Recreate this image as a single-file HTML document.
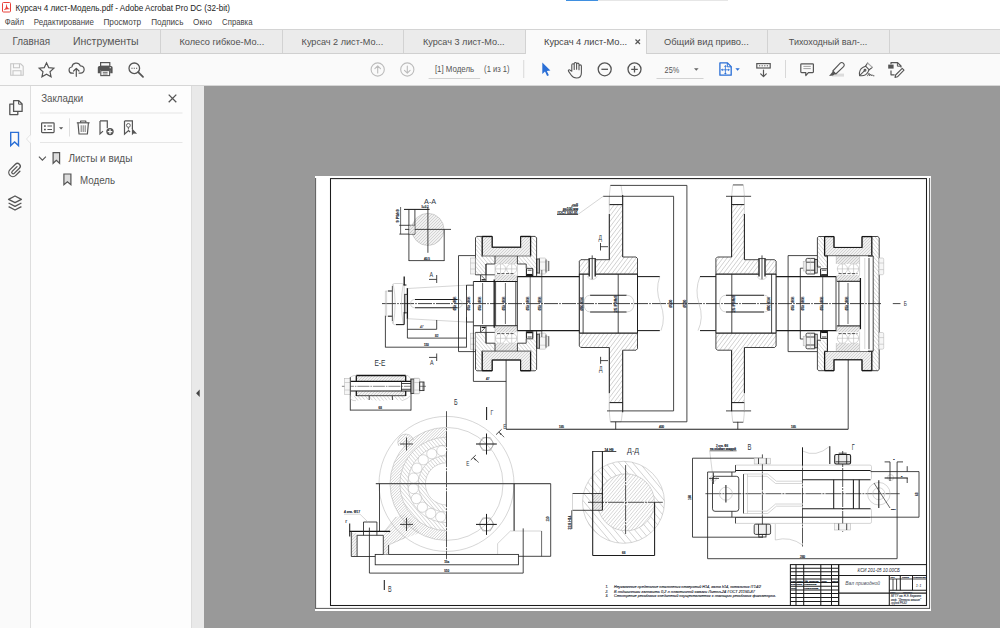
<!DOCTYPE html>
<html><head><meta charset="utf-8"><title>Acrobat</title>
<style>
html,body{margin:0;padding:0;width:1000px;height:628px;overflow:hidden;background:#fff;font-family:"Liberation Sans",sans-serif;}
div{position:absolute;box-sizing:border-box;}
#titlebar{left:0;top:0;width:1000px;height:14px;background:#fff;}
#menubar{left:0;top:14px;width:1000px;height:15px;background:#fff;}
#tabbar{left:0;top:29px;width:1000px;height:25px;background:#ebebeb;border-top:1px solid #d4d4d4;border-bottom:1px solid #d0d0d0;}
.tsep{top:0;width:1px;height:23px;background:#d2d2d2;}
#activetab{left:525px;top:0px;width:122px;height:24px;background:#fafafa;border-left:1px solid #d2d2d2;border-right:1px solid #d2d2d2;}
#toolbar{left:0;top:54px;width:1000px;height:32px;background:#fafafa;border-bottom:1px solid #d6d6d6;}
#sidebar{left:0;top:86px;width:31px;height:542px;background:#fafafa;border-right:1px solid #dedede;}
#panel{left:31px;top:86px;width:160px;height:542px;background:#fdfdfd;}
#splitter{left:191px;top:86px;width:13px;height:542px;background:#e9e9e9;border-left:1px solid #dcdcdc;}
#docarea{left:204px;top:86px;width:796px;height:542px;background:#999;}
#page{left:315px;top:176px;width:615.5px;height:435px;background:#fff;}
svg{position:absolute;left:0;top:0;}
text{font-family:"Liberation Sans",sans-serif;}
</style></head><body>
<div id="titlebar"></div>
<div id="menubar"></div>
<div id="tabbar">
 <div class="tsep" style="left:160px"></div>
 <div class="tsep" style="left:282px"></div>
 <div class="tsep" style="left:403px"></div>
 <div class="tsep" style="left:767px"></div>
 <div class="tsep" style="left:889px"></div>
 <div id="activetab"></div>
</div>
<div id="toolbar"></div>
<div id="sidebar"></div>
<div id="panel"></div>
<div id="splitter"></div>
<div id="docarea"></div>
<div id="page"></div>
<svg id="drawing" fill="none" width="1000" height="628" viewBox="0 0 1000 628">
<style>
#drawing path,#drawing rect,#drawing circle{stroke-linecap:butt;}
#drawing .kk{stroke:#151515;stroke-width:1.3}
#drawing .k{stroke:#1c1c1c;stroke-width:1.050}
#drawing .m{stroke:#262626;stroke-width:0.850}
#drawing .t{stroke:#303030;stroke-width:0.720}
#drawing .l{stroke:#b4b4b4;stroke-width:0.550}
#drawing .l2{stroke:#999;stroke-width:0.600}
#drawing .g2{stroke:#777;stroke-width:1.200}
#drawing .dk{stroke:#333;stroke-width:0.800;stroke-dasharray:3 1.500}
#drawing .cl{stroke:#2a2a2a;stroke-width:0.900;stroke-dasharray:14 1.200 1.600 1.200}
#drawing .cl2{stroke:#333;stroke-width:0.600;stroke-dasharray:12 1 1.500 1}
#drawing .cl3{stroke:#2a2a2a;stroke-width:0.800;stroke-dasharray:16 1 2 1}
#drawing .g3{stroke:#555;stroke-width:1.200}
#drawing .fr{stroke:#444;stroke-width:0.900}
#drawing .n{stroke:none}
#drawing text{font-family:"Liberation Sans",sans-serif;}
</style>
<path class="fr" d="M315.6 178L315.6 608.5"/>
<path class="fr" d="M929.6 178L929.6 608.5"/>
<path class="fr" d="M315.2 608.4L930 608.4"/>
<rect class="k" x="330.5" y="178.6" width="596" height="426.9"/>
<path class="cl" d="M382 303.6L881 303.6"/>
<path class="m" d="M892.8 303.6L900.5 303.6"/>
<text x="903.8" y="305.9" font-size="7.1" fill="#2e3642" textLength="3.2" lengthAdjust="spacingAndGlyphs">Б</text>
<clipPath id="c1"><path d="M411.8 229.4A16.1 16.1 0 1 0 444 229.4A16.1 16.1 0 1 0 411.8 229.4Z"/></clipPath>
<path d="M411.8 229.4A16.1 16.1 0 1 0 444 229.4A16.1 16.1 0 1 0 411.8 229.4Z" fill="#f1f1f1" stroke="none"/>
<path clip-path="url(#c1)" d="M393.44 228.55L427.05 194.94M394.94 230.05L428.55 196.44M396.44 231.55L430.05 197.94M397.94 233.05L431.55 199.44M399.44 234.55L433.05 200.94M400.94 236.05L434.55 202.44M402.44 237.55L436.05 203.94M403.94 239.05L437.55 205.44M405.44 240.55L439.05 206.94M406.94 242.05L440.55 208.44M408.44 243.55L442.05 209.94M409.94 245.05L443.55 211.44M411.44 246.55L445.05 212.94M412.94 248.05L446.55 214.44M414.44 249.55L448.05 215.94M415.94 251.05L449.55 217.44M417.44 252.55L451.05 218.94M418.94 254.05L452.55 220.44M420.44 255.55L454.05 221.94M421.94 257.05L455.55 223.44M423.44 258.55L457.05 224.94M424.94 260.05L458.55 226.44M426.44 261.55L460.05 227.94M427.94 263.05L461.55 229.44M429.44 264.55L463.05 230.94" stroke="#c4c4c4" stroke-width="0.7" fill="none"/>
<circle class="l" cx="427.9" cy="229.4" r="16.1"/>
<text x="424.1" y="203.6" font-size="7.9" fill="#2e3642" textLength="12.1" lengthAdjust="spacingAndGlyphs">А-А</text>
<path class="k" d="M404 209.4L429.6 209.4"/>
<path class="m" d="M408.9 209.4L408.9 261"/>
<path class="m" d="M414.9 209.4L414.9 234.1"/>
<path class="m" d="M427.9 207L427.9 252.8"/>
<path class="m" d="M405 229.4L451 229.4"/>
<path class="m" d="M399.3 225.3L415 225.3"/>
<path class="m" d="M399.3 234.1L415 234.1"/>
<path class="t" d="M400.6 207L400.6 234.1"/>
<path class="m" d="M444.2 229.4L444.2 261"/>
<path class="m" d="M408.9 260.6L444.2 260.6"/>
<clipPath id="c2"><path d="M409.4 225.6L414.6 225.6L414.6 233.8L409.4 233.8Z"/></clipPath>
<path d="M409.4 225.6L414.6 225.6L414.6 233.8L409.4 233.8Z" fill="#ebebeb" stroke="none"/>
<path clip-path="url(#c2)" d="M404.01 229.99L412.29 221.71M405.51 231.49L413.79 223.21M407.01 232.99L415.29 224.71M408.51 234.49L416.79 226.21M410.01 235.99L418.29 227.71M411.51 237.49L419.79 229.21M413.01 238.99L421.29 230.71" stroke="#bcbcbc" stroke-width="0.7" fill="none"/>
<text x="399.2" y="222.5" font-size="3.2" fill="#2c3440" transform="rotate(-90 399.2 222.5)" textLength="13" lengthAdjust="spacingAndGlyphs" stroke="#2c3440" stroke-width="0.22">9 P9/h9</text>
<text x="421.5" y="208.4" font-size="3" fill="#2c3440" textLength="7" lengthAdjust="spacingAndGlyphs" stroke="#2c3440" stroke-width="0.22">5+0.2</text>
<text x="424" y="259.6" font-size="3" fill="#2c3440" stroke="#2c3440" stroke-width="0.22">40.5</text>
<text x="429.5" y="277.1" font-size="7.9" fill="#2e3642" textLength="3.6" lengthAdjust="spacingAndGlyphs">А</text>
<path class="m" d="M429 279.4L436.7 279.4"/>
<path class="m" d="M436.7 275L436.7 283"/>
<text x="429.9" y="364.7" font-size="7.9" fill="#2e3642" textLength="3.6" lengthAdjust="spacingAndGlyphs">А</text>
<path class="m" d="M429 357.4L436.7 357.4"/>
<path class="m" d="M436.7 353.5L436.7 361"/>
<path class="k" d="M388 291L392.4 291"/>
<path class="k" d="M388 316.2L392.4 316.2"/>
<path class="l" d="M385.4 291L388 291"/>
<path class="l" d="M385.4 316.2L388 316.2"/>
<path class="m" d="M385.4 315.6L385.4 347.4"/>
<path class="l" d="M385.4 291L385.4 315.6"/>
<path class="l" d="M386.6 291L386.6 315.6"/>
<path class="l" d="M392.3 286 Q392.3 283.5 394.5 283.5 L402 283.5 Q404.2 283.5 404.2 286 L404.2 321.2 Q404.2 324.6 402 324.6 L394.5 324.6 Q392.3 324.6 392.3 321.2Z"/>
<path class="l" d="M393.3 284.5 Q397 303.6 393.3 323.5 M403.2 284.5 Q399.5 303.6 403.2 323.5"/>
<path class="k" d="M396 324.6L404.2 324.6"/>
<path class="k" d="M404.2 312L404.2 324.6"/>
<path class="t" d="M392.4 286L392.4 321"/>
<path class="kk" d="M404.2 276.5L404.2 285.2"/>
<path class="k" d="M403.6 285L406.4 285"/>
<path class="kk" d="M407.4 288L407.4 319"/>
<path class="m" d="M404.2 294.4L407.4 294.4"/>
<path class="m" d="M404.2 312.8L407.4 312.8"/>
<path class="k" d="M404.8 294.4L404.8 313.4"/>
<path class="l" d="M407.5 288.5L458.4 285.6"/>
<path class="l" d="M407.5 318.7L458.4 321.6"/>
<path class="l" d="M458.4 285.6L466.5 285.2"/>
<path class="l" d="M458.4 321.6L466.5 322"/>
<path class="k" d="M415 299.4L457.7 299.4"/>
<path class="k" d="M415 307.8L457.7 307.8"/>
<path class="l" d="M415 299.4 Q410.6 299.6 410.6 303.6 Q410.6 307.6 415 307.8 M457.7 299.4 Q462.2 299.6 462.2 303.6 Q462.2 307.6 457.7 307.8"/>
<path class="m" d="M436.7 320L436.7 329.3"/>
<path class="m" d="M407.4 329.3L436.7 329.3"/>
<path class="m" d="M407.4 319L407.4 338.1"/>
<path class="m" d="M407.4 338.1L466.5 338.1"/>
<path class="m" d="M385.4 347.2L466.5 347.2"/>
<text x="420" y="328.3" font-size="3" fill="#2c3440" font-style="italic" stroke="#2c3440" stroke-width="0.1">47</text>
<text x="435" y="337.1" font-size="3" fill="#2c3440" stroke="#2c3440" stroke-width="0.22">82</text>
<text x="424" y="346.2" font-size="3" fill="#2c3440" stroke="#2c3440" stroke-width="0.22">110</text>
<path class="m" d="M475.2 255.6L458.5 255.6L458.5 351.6L475.2 351.6"/>
<path class="m" d="M466.5 285.2L466.5 347.4"/>
<path class="m" d="M466.5 285.2L473.4 285.2"/>
<path class="m" d="M466.5 322L473.4 322"/>
<path class="m" d="M817.1 255.6L788.1 255.6L788.1 351.6L817.1 351.6"/>
<path class="m" d="M806 268.2L800.3 268.2L800.3 339L806 339"/>
<clipPath id="c3"><path d="M475.5 237.6L476.8 236.4L482.2 236.4L482.2 256L495 256L495 264L486 264L486 274.8L475.5 274.8Z"/></clipPath>
<path clip-path="url(#c3)" d="M489.9 222.29L518.87 256.81M487.75 224.09L516.72 258.61M485.61 225.89L514.58 260.41M483.46 227.68L512.43 262.21M481.32 229.48L510.29 264.01M479.17 231.28L508.14 265.81M477.03 233.08L506 267.61M474.88 234.88L503.85 269.41M472.74 236.68L501.71 271.21M470.59 238.48L499.56 273.01M468.45 240.28L497.42 274.81M466.3 242.08L495.27 276.61M464.16 243.88L493.13 278.41M462.01 245.68L490.98 280.21M459.87 247.48L488.84 282.01M457.72 249.28L486.69 283.81M455.58 251.08L484.55 285.61M453.43 252.88L482.4 287.41" stroke="#a4a4a4" stroke-width="0.45" fill="none"/>
<clipPath id="c4"><path d="M475.5 369.6L476.8 370.8L482.2 370.8L482.2 351.2L495 351.2L495 343.2L486 343.2L486 332.4L475.5 332.4Z"/></clipPath>
<path clip-path="url(#c4)" d="M489.98 318.22L518.95 352.74M487.83 320.02L516.8 354.54M485.69 321.82L514.66 356.34M483.54 323.62L512.51 358.14M481.4 325.42L510.37 359.94M479.25 327.22L508.22 361.74M477.11 329.02L506.08 363.54M474.96 330.81L503.93 365.34M472.82 332.61L501.79 367.14M470.67 334.41L499.64 368.94M468.53 336.21L497.5 370.74M466.38 338.01L495.35 372.54M464.24 339.81L493.21 374.34M462.09 341.61L491.06 376.14M459.95 343.41L488.92 377.94M457.8 345.21L486.77 379.74M455.66 347.01L484.63 381.54M453.52 348.81L482.48 383.34M451.37 350.61L480.34 385.14" stroke="#a4a4a4" stroke-width="0.45" fill="none"/>
<clipPath id="c5"><path d="M482.2 236.4L492.2 236.4L492.2 247.2L520.6 247.2L520.6 236.4L530.6 236.4L530.6 256L482.2 256Z"/></clipPath>
<path d="M482.2 236.4L492.2 236.4L492.2 247.2L520.6 247.2L520.6 236.4L530.6 236.4L530.6 256L482.2 256Z" fill="#f1f1f1" stroke="none"/>
<path clip-path="url(#c5)" d="M468.43 246.57L506.77 208.23M469.93 248.07L508.27 209.73M471.43 249.57L509.77 211.23M472.93 251.07L511.27 212.73M474.43 252.57L512.77 214.23M475.93 254.07L514.27 215.73M477.43 255.57L515.77 217.23M478.93 257.07L517.27 218.73M480.43 258.57L518.77 220.23M481.93 260.07L520.27 221.73M483.43 261.57L521.77 223.23M484.93 263.07L523.27 224.73M486.43 264.57L524.77 226.23M487.93 266.07L526.27 227.73M489.43 267.57L527.77 229.23M490.93 269.07L529.27 230.73M492.43 270.57L530.77 232.23M493.93 272.07L532.27 233.73M495.43 273.57L533.77 235.23M496.93 275.07L535.27 236.73M498.43 276.57L536.77 238.23M499.93 278.07L538.27 239.73M501.43 279.57L539.77 241.23M502.93 281.07L541.27 242.73M504.43 282.57L542.77 244.23M505.93 284.07L544.27 245.73M507.43 285.57L545.77 247.23" stroke="#c4c4c4" stroke-width="0.7" fill="none"/>
<clipPath id="c6"><path d="M482.2 370.8L492.2 370.8L492.2 360L520.6 360L520.6 370.8L530.6 370.8L530.6 351.2L482.2 351.2Z"/></clipPath>
<path d="M482.2 370.8L492.2 370.8L492.2 360L520.6 360L520.6 370.8L530.6 370.8L530.6 351.2L482.2 351.2Z" fill="#f1f1f1" stroke="none"/>
<path clip-path="url(#c6)" d="M468.03 360.96L506.36 322.63M469.53 362.46L507.86 324.13M471.03 363.96L509.36 325.63M472.53 365.46L510.86 327.13M474.03 366.96L512.36 328.63M475.53 368.46L513.86 330.13M477.03 369.96L515.36 331.63M478.53 371.46L516.86 333.13M480.03 372.96L518.36 334.63M481.53 374.46L519.86 336.13M483.03 375.96L521.36 337.63M484.53 377.46L522.86 339.13M486.03 378.96L524.36 340.63M487.53 380.46L525.86 342.13M489.03 381.96L527.36 343.63M490.53 383.46L528.86 345.13M492.03 384.96L530.36 346.63M493.53 386.46L531.86 348.13M495.03 387.96L533.36 349.63M496.53 389.46L534.86 351.13M498.03 390.96L536.36 352.63M499.53 392.46L537.86 354.13M501.03 393.96L539.36 355.63M502.53 395.46L540.86 357.13M504.03 396.96L542.36 358.63M505.53 398.46L543.86 360.13M507.03 399.96L545.36 361.63" stroke="#c4c4c4" stroke-width="0.7" fill="none"/>
<clipPath id="c7"><path d="M530.6 236.4L535.2 236.4L536.6 237.8L536.6 268L526.2 268L526.2 264L517.4 264L517.4 256L530.6 256Z"/></clipPath>
<path clip-path="url(#c7)" d="M531.02 223.38L556.08 253.24M528.88 225.18L553.93 255.04M526.73 226.98L551.79 256.84M524.59 228.78L549.64 258.64M522.44 230.58L547.5 260.44M520.3 232.38L545.35 262.24M518.15 234.18L543.21 264.04M516.01 235.98L541.06 265.84M513.86 237.78L538.92 267.64M511.72 239.58L536.77 269.44M509.58 241.38L534.63 271.24M507.43 243.18L532.48 273.04M505.29 244.98L530.34 274.84M503.14 246.78L528.19 276.64M501 248.58L526.05 278.44M498.85 250.38L523.9 280.24" stroke="#a4a4a4" stroke-width="0.45" fill="none"/>
<clipPath id="c8"><path d="M530.6 370.8L535.2 370.8L536.6 369.4L536.6 339.2L526.2 339.2L526.2 343.2L517.4 343.2L517.4 351.2L530.6 351.2Z"/></clipPath>
<path clip-path="url(#c8)" d="M530.17 326.9L555.22 356.76M528.02 328.7L553.07 358.56M525.88 330.5L550.93 360.36M523.73 332.3L548.78 362.16M521.59 334.1L546.64 363.96M519.44 335.9L544.49 365.76M517.3 337.7L542.35 367.56M515.15 339.5L540.2 369.36M513.01 341.3L538.06 371.16M510.86 343.1L535.91 372.96M508.72 344.9L533.77 374.76M506.57 346.7L531.62 376.56M504.43 348.5L529.48 378.36M502.28 350.3L527.33 380.16M500.14 352.1L525.19 381.96M497.99 353.9L523.04 383.76" stroke="#a4a4a4" stroke-width="0.45" fill="none"/>
<clipPath id="c9"><path d="M495 256L517.4 256L517.4 264L495 264Z"/></clipPath>
<path d="M495 256L517.4 256L517.4 264L495 264Z" fill="#ebebeb" stroke="none"/>
<path clip-path="url(#c9)" d="M487.98 260.01L506.21 241.78M489.48 261.51L507.71 243.28M490.98 263.01L509.21 244.78M492.48 264.51L510.71 246.28M493.98 266.01L512.21 247.78M495.48 267.51L513.71 249.28M496.98 269.01L515.21 250.78M498.48 270.51L516.71 252.28M499.98 272.01L518.21 253.78M501.48 273.51L519.71 255.28M502.98 275.01L521.21 256.78M504.48 276.51L522.71 258.28M505.98 278.01L524.21 259.78M507.48 279.51L525.71 261.28" stroke="#bcbcbc" stroke-width="0.7" fill="none"/>
<clipPath id="c10"><path d="M495 343.2L517.4 343.2L517.4 351.2L495 351.2Z"/></clipPath>
<path d="M495 343.2L517.4 343.2L517.4 351.2L495 351.2Z" fill="#ebebeb" stroke="none"/>
<path clip-path="url(#c10)" d="M487.88 347.11L506.11 328.88M489.38 348.61L507.61 330.38M490.88 350.11L509.11 331.88M492.38 351.61L510.61 333.38M493.88 353.11L512.11 334.88M495.38 354.61L513.61 336.38M496.88 356.11L515.11 337.88M498.38 357.61L516.61 339.38M499.88 359.11L518.11 340.88M501.38 360.61L519.61 342.38M502.88 362.11L521.11 343.88M504.38 363.61L522.61 345.38M505.88 365.11L524.11 346.88M507.38 366.61L525.61 348.38" stroke="#bcbcbc" stroke-width="0.7" fill="none"/>
<clipPath id="c11"><path d="M495 274.8L517.4 274.8L517.4 280.8L495 280.8Z"/></clipPath>
<path d="M495 274.8L517.4 274.8L517.4 280.8L495 280.8Z" fill="#ebebeb" stroke="none"/>
<path clip-path="url(#c11)" d="M488.29 277.7L506.1 259.89M489.79 279.2L507.6 261.39M491.29 280.7L509.1 262.89M492.79 282.2L510.6 264.39M494.29 283.7L512.1 265.89M495.79 285.2L513.6 267.39M497.29 286.7L515.1 268.89M498.79 288.2L516.6 270.39M500.29 289.7L518.1 271.89M501.79 291.2L519.6 273.39M503.29 292.7L521.1 274.89M504.79 294.2L522.6 276.39M506.29 295.7L524.1 277.89M507.79 297.2L525.6 279.39" stroke="#bcbcbc" stroke-width="0.7" fill="none"/>
<clipPath id="c12"><path d="M495 326.4L517.4 326.4L517.4 332.4L495 332.4Z"/></clipPath>
<path d="M495 326.4L517.4 326.4L517.4 332.4L495 332.4Z" fill="#ebebeb" stroke="none"/>
<path clip-path="url(#c12)" d="M487.99 329L505.8 311.19M489.49 330.5L507.3 312.69M490.99 332L508.8 314.19M492.49 333.5L510.3 315.69M493.99 335L511.8 317.19M495.49 336.5L513.3 318.69M496.99 338L514.8 320.19M498.49 339.5L516.3 321.69M499.99 341L517.8 323.19M501.49 342.5L519.3 324.69M502.99 344L520.8 326.19M504.49 345.5L522.3 327.69M505.99 347L523.8 329.19M507.49 348.5L525.3 330.69" stroke="#bcbcbc" stroke-width="0.7" fill="none"/>
<circle class="l" cx="500.5" cy="268.9" r="5.1" fill="#fff"/>
<circle class="l" cx="500.5" cy="338.3" r="5.1" fill="#fff"/>
<circle class="l" cx="511.7" cy="268.9" r="5.1" fill="#fff"/>
<circle class="l" cx="511.7" cy="338.3" r="5.1" fill="#fff"/>
<path class="l" d="M500.5 264L500.5 274"/>
<path class="l" d="M500.5 343.2L500.5 333.2"/>
<path class="l" d="M511.7 264L511.7 274"/>
<path class="l" d="M511.7 343.2L511.7 333.2"/>
<path class="l" d="M495.5 268.9L517 268.9"/>
<path class="l" d="M495.5 338.3L517 338.3"/>
<path class="dk" d="M497 273.6L515 273.6"/>
<path class="dk" d="M497 333.6L515 333.6"/>
<path class="m" d="M475.5 274.8L475.5 237.8L476.8 236.4L492.2 236.4L492.2 247.2L520.6 247.2L520.6 236.4L535.2 236.4L536.6 237.8L536.6 274.8"/>
<path class="m" d="M475.5 332.4L475.5 369.4L476.8 370.8L492.2 370.8L492.2 360L520.6 360L520.6 370.8L535.2 370.8L536.6 369.4L536.6 332.4"/>
<path class="kk" d="M482.2 236.4L482.2 256.4"/>
<path class="kk" d="M482.2 370.8L482.2 350.8"/>
<path class="kk" d="M530.6 236.4L530.6 256.4"/>
<path class="kk" d="M530.6 370.8L530.6 350.8"/>
<path class="kk" d="M482.2 236.5L492.2 236.5"/>
<path class="kk" d="M482.2 370.7L492.2 370.7"/>
<path class="kk" d="M520.6 236.5L530.6 236.5"/>
<path class="kk" d="M520.6 370.7L530.6 370.7"/>
<path class="k" d="M492.2 236.4L492.2 247.2L520.6 247.2L520.6 236.4"/>
<path class="k" d="M492.2 370.8L492.2 360L520.6 360L520.6 370.8"/>
<path class="g2" d="M482 256L531 256"/>
<path class="g2" d="M482 351.2L531 351.2"/>
<path class="m" d="M495 256L495 264L486 264L486 274.8"/>
<path class="m" d="M495 351.2L495 343.2L486 343.2L486 332.4"/>
<path class="m" d="M517.4 256L517.4 264L526.2 264L526.2 268.4L533 268.4"/>
<path class="m" d="M517.4 351.2L517.4 343.2L526.2 343.2L526.2 338.8L533 338.8"/>
<path class="m" d="M486 274.8L495 274.8"/>
<path class="m" d="M486 332.4L495 332.4"/>
<path class="m" d="M486 264L486 281"/>
<path class="m" d="M486 343.2L486 326.2"/>
<path class="l" d="M495 264L495 281"/>
<path class="l" d="M495 343.2L495 326.2"/>
<path class="l" d="M517.4 264L517.4 276.6"/>
<path class="l" d="M517.4 343.2L517.4 330.6"/>
<path class="m" d="M480.6 281L480.6 274.8L486 274.8"/>
<path class="m" d="M480.6 326.2L480.6 332.4L486 332.4"/>
<path class="kk" d="M481.6 279.8L485.6 279.8"/>
<path class="kk" d="M481.6 327.4L485.6 327.4"/>
<path class="t" d="M481.4 275.6L485 279.4"/>
<path class="t" d="M481.4 331.6L485 327.8"/>
<path class="k" d="M526.4 268.8L526.4 275.4L532.8 275.4L532.8 268.8"/>
<path class="k" d="M526.4 338.4L526.4 331.8L532.8 331.8L532.8 338.4"/>
<path class="kk" d="M527 274.6L532.4 274.6"/>
<path class="kk" d="M527 332.6L532.4 332.6"/>
<path class="m" d="M527.6 270.2L531.6 270.2"/>
<path class="m" d="M527.6 337L531.6 337"/>
<path class="m" d="M475.5 274.8L480.6 274.8"/>
<path class="m" d="M475.5 332.4L480.6 332.4"/>
<path class="m" d="M536.6 268L536.6 276.6"/>
<path class="m" d="M536.6 339.2L536.6 330.6"/>
<path class="m" d="M533 276.4L541.8 276.4"/>
<path class="m" d="M533 330.8L541.8 330.8"/>
<rect class="l" x="470.4" y="258" width="4.8" height="16" fill="#f4f4f4"/>
<rect class="l" x="470.4" y="333.2" width="4.8" height="16" fill="#f4f4f4"/>
<path class="l" d="M470.4 263L475 263"/>
<path class="l" d="M470.4 344.2L475 344.2"/>
<path class="l" d="M470.4 269L475 269"/>
<path class="l" d="M470.4 338.2L475 338.2"/>
<rect class="m" x="536.8" y="259" width="2.4" height="14"/>
<rect class="m" x="536.8" y="334.2" width="2.4" height="14"/>
<path class="l" d="M539.2 258 L544.6 258 Q546 258 546 259.4 L546 272.6 Q546 274 544.6 274 L539.2 274Z" fill="#f6f6f6"/>
<path class="l" d="M539.2 349.2 L544.6 349.2 Q546 349.2 546 347.8 L546 334.6 Q546 333.2 544.6 333.2 L539.2 333.2Z" fill="#f6f6f6"/>
<path class="l" d="M539.2 262L546 262"/>
<path class="l" d="M539.2 345.2L546 345.2"/>
<path class="l" d="M539.2 270L546 270"/>
<path class="l" d="M539.2 337.2L546 337.2"/>
<rect class="l" x="546" y="261" width="2.6" height="10" fill="#e8e8e8"/>
<rect class="l" x="546" y="336.2" width="2.6" height="10" fill="#e8e8e8"/>
<path class="t" d="M546 259.4L546 272.6"/>
<path class="t" d="M546 347.8L546 334.6"/>
<path class="t" d="M548.8 261L548.8 271"/>
<path class="t" d="M548.8 346.2L548.8 336.2"/>
<path class="m" d="M536.8 259L536.8 273"/>
<path class="m" d="M536.8 348.2L536.8 334.2"/>
<path class="m" d="M539.4 258.4L539.4 273.6"/>
<path class="m" d="M539.4 348.8L539.4 333.6"/>
<path class="k" d="M473.4 281.4L517.4 281.4"/>
<path class="k" d="M473.4 325.8L517.4 325.8"/>
<path class="m" d="M473.4 281.4L473.4 325.8"/>
<path class="m" d="M466.5 285.2L466.5 290"/>
<path class="m" d="M466.5 322L466.5 317.2"/>
<path class="kk" d="M494.2 279.5L494.2 327.7"/>
<path class="m" d="M495.6 281.4L495.6 325.8"/>
<path class="m" d="M515.8 281.4L515.8 325.8"/>
<path class="m" d="M517.4 276.6L517.4 330.6"/>
<path class="t" d="M482.6 283L482.6 324"/>
<path class="t" d="M505.4 283L505.4 324"/>
<path class="t" d="M530.2 276.6L530.2 330.6"/>
<path class="t" d="M541.8 270L541.8 337"/>
<path class="k" d="M517.4 276.6L579.3 276.6"/>
<path class="k" d="M517.4 330.6L579.3 330.6"/>
<text x="456.5" y="302.4" font-size="2.7" fill="#2a3240" transform="rotate(-90 456.5 302.4)" textLength="5.6" lengthAdjust="spacingAndGlyphs" stroke="#2a3240" stroke-width="0.22">Ø60k6</text>
<text x="456.5" y="310.2" font-size="2.7" fill="#2a3240" transform="rotate(-90 456.5 310.2)" textLength="5" lengthAdjust="spacingAndGlyphs" stroke="#2a3240" stroke-width="0.22">Ø55h</text>
<text x="470.1" y="302.4" font-size="2.7" fill="#2a3240" transform="rotate(-90 470.1 302.4)" textLength="5.6" lengthAdjust="spacingAndGlyphs" stroke="#2a3240" stroke-width="0.22">Ø60k6</text>
<text x="470.1" y="310.2" font-size="2.7" fill="#2a3240" transform="rotate(-90 470.1 310.2)" textLength="5" lengthAdjust="spacingAndGlyphs" stroke="#2a3240" stroke-width="0.22">Ø55h</text>
<text x="481.3" y="302.4" font-size="2.7" fill="#2a3240" transform="rotate(-90 481.3 302.4)" textLength="5.6" lengthAdjust="spacingAndGlyphs" stroke="#2a3240" stroke-width="0.22">Ø60k6</text>
<text x="481.3" y="310.2" font-size="2.7" fill="#2a3240" transform="rotate(-90 481.3 310.2)" textLength="5" lengthAdjust="spacingAndGlyphs" stroke="#2a3240" stroke-width="0.22">Ø55h</text>
<text x="504.9" y="302.4" font-size="2.7" fill="#2a3240" transform="rotate(-90 504.9 302.4)" textLength="5.6" lengthAdjust="spacingAndGlyphs" stroke="#2a3240" stroke-width="0.22">Ø60k6</text>
<text x="504.9" y="310.2" font-size="2.7" fill="#2a3240" transform="rotate(-90 504.9 310.2)" textLength="5" lengthAdjust="spacingAndGlyphs" stroke="#2a3240" stroke-width="0.22">Ø55h</text>
<text x="529.3" y="302.4" font-size="2.7" fill="#2a3240" transform="rotate(-90 529.3 302.4)" textLength="5.6" lengthAdjust="spacingAndGlyphs" stroke="#2a3240" stroke-width="0.22">Ø60k6</text>
<text x="529.3" y="310.2" font-size="2.7" fill="#2a3240" transform="rotate(-90 529.3 310.2)" textLength="5" lengthAdjust="spacingAndGlyphs" stroke="#2a3240" stroke-width="0.22">Ø55h</text>
<text x="540.9" y="302.4" font-size="2.7" fill="#2a3240" transform="rotate(-90 540.9 302.4)" textLength="5.6" lengthAdjust="spacingAndGlyphs" stroke="#2a3240" stroke-width="0.22">Ø60k6</text>
<text x="540.9" y="310.2" font-size="2.7" fill="#2a3240" transform="rotate(-90 540.9 310.2)" textLength="5" lengthAdjust="spacingAndGlyphs" stroke="#2a3240" stroke-width="0.22">Ø55h</text>
<path class="m" d="M506.1 360L506.1 429.2"/>
<path class="m" d="M473.4 325.8L473.4 381.4"/>
<path class="m" d="M473.4 381.4L506.1 381.4"/>
<text x="486" y="380.4" font-size="3" fill="#2c3440" stroke="#2c3440" stroke-width="0.22">47</text>
<text x="454" y="405" font-size="9.0" fill="#2e3642" textLength="3.6" lengthAdjust="spacingAndGlyphs">Б</text>
<path class="k" d="M486.6 407L486.6 420"/>
<text x="490.5" y="414.6" font-size="8.0" fill="#2e3642" textLength="2.8" lengthAdjust="spacingAndGlyphs">Г</text>
<clipPath id="c13"><path d="M609.3 204.6L622.5 204.6L622.5 257L636 257L637.5 258.5L637.5 274.1L579.3 274.1L579.3 261.2L580.8 259.7L609.3 259.7Z"/></clipPath>
<path clip-path="url(#c13)" d="M541.28 246.78L597.04 172.78M543.92 248.76L599.67 174.77M546.55 250.75L602.31 176.76M549.19 252.74L604.95 178.74M551.82 254.72L607.58 180.73M554.46 256.71L610.22 182.71M557.09 258.69L612.85 184.7M559.73 260.68L615.49 186.69M562.36 262.67L618.12 188.67M565 264.65L620.76 190.66M567.64 266.64L623.39 192.64M570.27 268.62L626.03 194.63M572.91 270.61L628.66 196.62M575.54 272.6L631.3 198.6M578.18 274.58L633.94 200.59M580.81 276.57L636.57 202.57M583.45 278.55L639.21 204.56M586.08 280.54L641.84 206.55M588.72 282.53L644.48 208.53M591.35 284.51L647.11 210.52M593.99 286.5L649.75 212.5M596.63 288.48L652.38 214.49M599.26 290.47L655.02 216.48M601.9 292.45L657.66 218.46M604.53 294.44L660.29 220.45M607.17 296.43L662.93 222.43M609.8 298.41L665.56 224.42M612.44 300.4L668.2 226.41M615.07 302.38L670.83 228.39M617.71 304.37L673.47 230.38" stroke="#a0a0a0" stroke-width="0.5" fill="none"/>
<clipPath id="c14"><path d="M609.3 402.6L622.5 402.6L622.5 350.2L636 350.2L637.5 348.7L637.5 333.1L579.3 333.1L579.3 346L580.8 347.5L609.3 347.5Z"/></clipPath>
<path clip-path="url(#c14)" d="M542.77 376.4L598.53 302.41M545.41 378.39L601.17 304.39M548.04 380.37L603.8 306.38M550.68 382.36L606.44 308.36M553.31 384.34L609.07 310.35M555.95 386.33L611.71 312.34M558.58 388.32L614.34 314.32M561.22 390.3L616.98 316.31M563.86 392.29L619.61 318.29M566.49 394.27L622.25 320.28M569.13 396.26L624.88 322.27M571.76 398.25L627.52 324.25M574.4 400.23L630.16 326.24M577.03 402.22L632.79 328.22M579.67 404.2L635.43 330.21M582.3 406.19L638.06 332.2M584.94 408.18L640.7 334.18M587.57 410.16L643.33 336.17M590.21 412.15L645.97 338.15M592.85 414.13L648.6 340.14M595.48 416.12L651.24 342.13M598.12 418.11L653.88 344.11M600.75 420.09L656.51 346.1M603.39 422.08L659.15 348.08M606.02 424.06L661.78 350.07M608.66 426.05L664.42 352.06M611.29 428.04L667.05 354.04M613.93 430.02L669.69 356.03M616.57 432.01L672.32 358.01M619.2 433.99L674.96 360" stroke="#a0a0a0" stroke-width="0.5" fill="none"/>
<path class="l" d="M610.4 185.4 L621 185.4 Q622.6 192 622.7 204.6 M610.4 185.4 Q609.2 192 609.3 204.6"/>
<path class="l" d="M610.4 421.8 L621 421.8 Q622.6 415.2 622.7 402.6 M610.4 421.8 Q609.2 415.2 609.3 402.6"/>
<path class="k" d="M609.3 204.6L622.7 204.6"/>
<path class="k" d="M609.3 402.6L622.7 402.6"/>
<path class="k" d="M609.3 214L609.3 259.7"/>
<path class="k" d="M609.3 393.2L609.3 347.5"/>
<path class="l" d="M609.3 196.3L609.3 214"/>
<path class="l" d="M609.3 410.9L609.3 393.2"/>
<path class="k" d="M622.7 195L622.7 257"/>
<path class="k" d="M622.7 412.2L622.7 350.2"/>
<path class="m" d="M609.3 259.7L580.8 259.7L579.3 261.2L579.3 274.1"/>
<path class="m" d="M609.3 347.5L580.8 347.5L579.3 346L579.3 333.1"/>
<path class="m" d="M622.7 257L636 257L637.5 258.5L637.5 274.1"/>
<path class="m" d="M622.7 350.2L636 350.2L637.5 348.7L637.5 333.1"/>
<path class="k" d="M579.3 274.1L637.5 274.1"/>
<path class="k" d="M579.3 333.1L637.5 333.1"/>
<path class="k" d="M579.3 274.1L579.3 333.1"/>
<path class="k" d="M637.5 274.1L637.5 333.1"/>
<path class="m" d="M583.1 274.1L583.1 333.1"/>
<path class="m" d="M618.2 274.1L618.2 333.1"/>
<rect class="n" x="588.9" y="258.4" width="6.6" height="18" fill="#fff"/>
<path class="kk" d="M589.2 258.4L589.2 276.6"/>
<path class="kk" d="M595.2 258.4L595.2 276.6"/>
<path class="m" d="M592.2 255.4L592.2 279.4"/>
<path class="m" d="M588.6 258.6L595.8 258.6"/>
<path class="l" d="M587 276.4 Q592.2 283 597.4 276.4"/>
<path class="k" d="M590.1 295.2L626.6 295.2"/>
<path class="k" d="M590.1 312L626.6 312"/>
<path class="l" d="M590.1 295.2 Q584 295.6 584 303.6 Q584 311.6 590.1 312 M626.6 295.2 Q634 295.6 634 303.6 Q634 311.6 626.6 312"/>
<text x="582.5" y="310.5" font-size="2.8" fill="#2c3440" transform="rotate(-90 582.5 310.5)" textLength="13.5" lengthAdjust="spacingAndGlyphs" stroke="#2c3440" stroke-width="0.22">Ø90 H7/r6</text>
<text x="616.6" y="312.4" font-size="2.8" fill="#2c3440" transform="rotate(-90 616.6 312.4)" textLength="17" lengthAdjust="spacingAndGlyphs" stroke="#2c3440" stroke-width="0.22">25 P9/h9</text>
<path class="k" d="M637.5 276.6L659.8 276.6"/>
<path class="k" d="M637.5 330.6L659.8 330.6"/>
<path class="l" d="M659.8 276.6 Q655 290 660.5 303.6 Q666 318 661 330.6"/>
<path class="l" d="M700 276.6 Q694.500 290 699 303.6 Q704 318 698 330.6"/>
<path class="k" d="M700 276.6L715.9 276.6"/>
<path class="k" d="M700 330.6L715.9 330.6"/>
<path class="m" d="M610.4 185.4L686.9 185.4L686.9 421.8L610.5 421.8"/>
<path class="m" d="M603.2 196.3L673.6 196.3L673.6 410.9L607 410.9"/>
<text x="672.4" y="307.4" font-size="2.8" fill="#2c3440" transform="rotate(-90 672.4 307.4)" textLength="7.5" lengthAdjust="spacingAndGlyphs" stroke="#2c3440" stroke-width="0.22">Ø300</text>
<text x="685.6" y="307.4" font-size="2.8" fill="#2c3440" transform="rotate(-90 685.6 307.4)" textLength="7.5" lengthAdjust="spacingAndGlyphs" stroke="#2c3440" stroke-width="0.22">Ø330</text>
<path class="l" d="M603.2 196.3L578 214.4L557 214.4"/>
<text x="572" y="205.6" font-size="3" fill="#2c3440" textLength="6" lengthAdjust="spacingAndGlyphs" stroke="#2c3440" stroke-width="0.22">z=8</text>
<path class="t" d="M571 206.2L578 206.2"/>
<text x="563" y="209.9" font-size="3" fill="#2c3440" textLength="15" lengthAdjust="spacingAndGlyphs" stroke="#2c3440" stroke-width="0.22">p=100 мм</text>
<path class="t" d="M562.6 210.4L578 210.4"/>
<text x="557.4" y="213.9" font-size="3" fill="#2c3440" textLength="20.4" lengthAdjust="spacingAndGlyphs" stroke="#2c3440" stroke-width="0.22">ГОСТ 592-81</text>
<path class="m" d="M557 214.4L578 214.4"/>
<text x="598.6" y="239.8" font-size="7.1" fill="#2e3642" textLength="3.5" lengthAdjust="spacingAndGlyphs">Д</text>
<path class="m" d="M600.5 243L600.5 250.5"/>
<path class="m" d="M600.5 246.7L608 246.7"/>
<text x="598.9" y="370.8" font-size="7.1" fill="#2e3642" textLength="3.5" lengthAdjust="spacingAndGlyphs">Д</text>
<path class="m" d="M600.6 356.8L600.6 363.8"/>
<path class="m" d="M600.6 360.6L608 360.6"/>
<clipPath id="c15"><path d="M731.7 204.6L744.3 204.6L744.3 259.7L774.6 259.7L776.1 261.2L776.1 274.1L715.9 274.1L715.9 258.5L717.4 257L731.7 257Z"/></clipPath>
<path clip-path="url(#c15)" d="M677.7 246.7L734.24 171.67M680.33 248.68L736.87 173.65M682.97 250.67L739.51 175.64M685.6 252.66L742.14 177.63M688.24 254.64L744.78 179.61M690.88 256.63L747.41 181.6M693.51 258.61L750.05 183.58M696.15 260.6L752.69 185.57M698.78 262.59L755.32 187.56M701.42 264.57L757.96 189.54M704.05 266.56L760.59 191.53M706.69 268.54L763.23 193.51M709.32 270.53L765.86 195.5M711.96 272.52L768.5 197.49M714.59 274.5L771.13 199.47M717.23 276.49L773.77 201.46M719.87 278.47L776.4 203.44M722.5 280.46L779.04 205.43M725.14 282.45L781.68 207.42M727.77 284.43L784.31 209.4M730.41 286.42L786.95 211.39M733.04 288.4L789.58 213.37M735.68 290.39L792.22 215.36M738.31 292.38L794.85 217.35M740.95 294.36L797.49 219.33M743.59 296.35L800.12 221.32M746.22 298.33L802.76 223.3M748.86 300.32L805.4 225.29M751.49 302.31L808.03 227.28M754.13 304.29L810.67 229.26M756.76 306.28L813.3 231.25" stroke="#a0a0a0" stroke-width="0.5" fill="none"/>
<clipPath id="c16"><path d="M731.7 402.6L744.3 402.6L744.3 347.5L774.6 347.5L776.1 346L776.1 333.1L715.9 333.1L715.9 348.7L717.4 350.2L731.7 350.2Z"/></clipPath>
<path clip-path="url(#c16)" d="M679.19 376.32L735.73 301.29M681.82 378.31L738.36 303.28M684.46 380.29L741 305.26M687.1 382.28L743.63 307.25M689.73 384.27L746.27 309.24M692.37 386.25L748.9 311.22M695 388.24L751.54 313.21M697.64 390.22L754.18 315.19M700.27 392.21L756.81 317.18M702.91 394.2L759.45 319.17M705.54 396.18L762.08 321.15M708.18 398.17L764.72 323.14M710.81 400.15L767.35 325.12M713.45 402.14L769.99 327.11M716.09 404.13L772.62 329.1M718.72 406.11L775.26 331.08M721.36 408.1L777.9 333.07M723.99 410.08L780.53 335.05M726.63 412.07L783.17 337.04M729.26 414.06L785.8 339.03M731.9 416.04L788.44 341.01M734.53 418.03L791.07 343M737.17 420.01L793.71 344.98M739.81 422L796.34 346.97M742.44 423.99L798.98 348.96M745.08 425.97L801.61 350.94M747.71 427.96L804.25 352.93M750.35 429.94L806.89 354.91M752.98 431.93L809.52 356.9M755.62 433.92L812.16 358.89" stroke="#a0a0a0" stroke-width="0.5" fill="none"/>
<path class="l" d="M732.8 184.9 L743.4 184.9 Q744.5 192 744.5 204.6 M732.8 184.9 Q731.5 192 731.6 204.6"/>
<path class="l" d="M732.8 422.3 L743.4 422.3 Q744.5 415.2 744.5 402.6 M732.8 422.3 Q731.5 415.2 731.6 402.6"/>
<path class="g2" d="M733 184.9L743.2 184.9"/>
<path class="g2" d="M733 422.3L743.2 422.3"/>
<path class="k" d="M731.6 204.6L744.4 204.6"/>
<path class="k" d="M731.6 402.6L744.4 402.6"/>
<path class="m" d="M726 196.3L751.1 196.3"/>
<path class="m" d="M726 410.9L751.1 410.9"/>
<path class="k" d="M731.6 196L731.6 257"/>
<path class="k" d="M731.6 411.2L731.6 350.2"/>
<path class="k" d="M744.4 214L744.4 259.7"/>
<path class="k" d="M744.4 393.2L744.4 347.5"/>
<path class="l" d="M744.4 196.3L744.4 214"/>
<path class="l" d="M744.4 410.9L744.4 393.2"/>
<path class="m" d="M731.6 257L717.4 257L715.9 258.5L715.9 274.1"/>
<path class="m" d="M731.6 350.2L717.4 350.2L715.9 348.7L715.9 333.1"/>
<path class="m" d="M744.4 259.7L774.6 259.7L776.1 261.2L776.1 274.1"/>
<path class="m" d="M744.4 347.5L774.6 347.5L776.1 346L776.1 333.1"/>
<path class="k" d="M715.9 274.1L776.1 274.1"/>
<path class="k" d="M715.9 333.1L776.1 333.1"/>
<path class="k" d="M715.9 274.1L715.9 333.1"/>
<path class="k" d="M776.1 274.1L776.1 333.1"/>
<path class="m" d="M731.8 274.1L731.8 333.1"/>
<path class="m" d="M771.6 274.1L771.6 333.1"/>
<rect class="n" x="758.7" y="258.4" width="6.6" height="18" fill="#fff"/>
<path class="kk" d="M759 258.4L759 276.6"/>
<path class="kk" d="M765 258.4L765 276.6"/>
<path class="m" d="M762 255.4L762 279.4"/>
<path class="m" d="M758.4 258.6L765.6 258.6"/>
<path class="l" d="M756.8 276.4 Q762 283 767.2 276.4"/>
<path class="k" d="M726 295.2L764 295.2"/>
<path class="k" d="M726 312L764 312"/>
<path class="l" d="M726 295.2 Q719.5 295.6 719.5 303.6 Q719.5 311.6 726 312 M764 295.2 Q770.500 295.6 770.500 303.6 Q770.500 311.6 764 312"/>
<text x="735.2" y="312.4" font-size="2.8" fill="#2c3440" transform="rotate(-90 735.2 312.4)" textLength="17" lengthAdjust="spacingAndGlyphs" stroke="#2c3440" stroke-width="0.22">25 P9/h9</text>
<text x="770.2" y="310.5" font-size="2.8" fill="#2c3440" transform="rotate(-90 770.2 310.5)" textLength="13.5" lengthAdjust="spacingAndGlyphs" stroke="#2c3440" stroke-width="0.22">Ø90 H7/r6</text>
<path class="k" d="M776.1 276.6L836.8 276.6"/>
<path class="k" d="M776.1 330.6L836.8 330.6"/>
<path class="m" d="M737.8 421.8L737.8 429.2"/>
<path class="m" d="M615.7 421.8L615.7 429.2"/>
<path class="k" d="M506.1 429.2L848.2 429.2"/>
<path class="m" d="M848.2 360L848.2 429.2"/>
<text x="559" y="428.2" font-size="3" fill="#2c3440" stroke="#2c3440" stroke-width="0.22">185</text>
<text x="659" y="428.2" font-size="3" fill="#2c3440" stroke="#2c3440" stroke-width="0.22">400</text>
<text x="791" y="428.2" font-size="3" fill="#2c3440" stroke="#2c3440" stroke-width="0.22">185</text>
<clipPath id="c17"><path d="M817.4 237.8L818.6 236.5L824.6 236.5L824.6 256L827.4 256L827.4 267L817.4 267Z"/></clipPath>
<path clip-path="url(#c17)" d="M826.02 226.46L847.93 252.58M823.87 228.26L845.79 254.38M821.73 230.06L843.64 256.18M819.58 231.86L841.5 257.98M817.44 233.66L839.35 259.78M815.29 235.46L837.21 261.58M813.15 237.26L835.06 263.38M811 239.06L832.92 265.18M808.86 240.86L830.77 266.98M806.71 242.66L828.63 268.78M804.57 244.46L826.48 270.58M802.42 246.26L824.34 272.38M800.28 248.06L822.2 274.18M798.13 249.86L820.05 275.98" stroke="#a4a4a4" stroke-width="0.45" fill="none"/>
<clipPath id="c18"><path d="M817.4 369.4L818.6 370.7L824.6 370.7L824.6 351.2L827.4 351.2L827.4 340.2L817.4 340.2Z"/></clipPath>
<path clip-path="url(#c18)" d="M825.6 330.51L847.52 356.63M823.46 332.31L845.37 358.43M821.31 334.11L843.23 360.23M819.17 335.91L841.08 362.03M817.02 337.71L838.94 363.83M814.88 339.51L836.79 365.63M812.73 341.31L834.65 367.43M810.59 343.11L832.5 369.23M808.44 344.91L830.36 371.03M806.3 346.71L828.21 372.83M804.15 348.51L826.07 374.63M802.01 350.31L823.92 376.43M799.86 352.11L821.78 378.23M797.72 353.91L819.63 380.03" stroke="#a4a4a4" stroke-width="0.45" fill="none"/>
<clipPath id="c19"><path d="M824.6 236.5L834 236.5L834 247.4L862 247.4L862 236.5L871.8 236.5L871.8 255.5L824.6 255.5Z"/></clipPath>
<path d="M824.6 236.5L834 236.5L834 247.4L862 247.4L862 236.5L871.8 236.5L871.8 255.5L824.6 255.5Z" fill="#f1f1f1" stroke="none"/>
<path clip-path="url(#c19)" d="M810.9 246.09L848.29 208.7M812.4 247.59L849.79 210.2M813.9 249.09L851.29 211.7M815.4 250.59L852.79 213.2M816.9 252.09L854.29 214.7M818.4 253.59L855.79 216.2M819.9 255.09L857.29 217.7M821.4 256.59L858.79 219.2M822.9 258.09L860.29 220.7M824.4 259.59L861.79 222.2M825.9 261.09L863.29 223.7M827.4 262.59L864.79 225.2M828.9 264.09L866.29 226.7M830.4 265.59L867.79 228.2M831.9 267.09L869.29 229.7M833.4 268.59L870.79 231.2M834.9 270.09L872.29 232.7M836.4 271.59L873.79 234.2M837.9 273.09L875.29 235.7M839.4 274.59L876.79 237.2M840.9 276.09L878.29 238.7M842.4 277.59L879.79 240.2M843.9 279.09L881.29 241.7M845.4 280.59L882.79 243.2M846.9 282.09L884.29 244.7M848.4 283.59L885.79 246.2M849.9 285.09L887.29 247.7" stroke="#c4c4c4" stroke-width="0.7" fill="none"/>
<clipPath id="c20"><path d="M824.6 370.7L834 370.7L834 359.8L862 359.8L862 370.7L871.8 370.7L871.8 351.7L824.6 351.7Z"/></clipPath>
<path d="M824.6 370.7L834 370.7L834 359.8L862 359.8L862 370.7L871.8 370.7L871.8 351.7L824.6 351.7Z" fill="#f1f1f1" stroke="none"/>
<path clip-path="url(#c20)" d="M810.3 360.69L847.69 323.3M811.8 362.19L849.19 324.8M813.3 363.69L850.69 326.3M814.8 365.19L852.19 327.8M816.3 366.69L853.69 329.3M817.8 368.19L855.19 330.8M819.3 369.69L856.69 332.3M820.8 371.19L858.19 333.8M822.3 372.69L859.69 335.3M823.8 374.19L861.19 336.8M825.3 375.69L862.69 338.3M826.8 377.19L864.19 339.8M828.3 378.69L865.69 341.3M829.8 380.19L867.19 342.8M831.3 381.69L868.69 344.3M832.8 383.19L870.19 345.8M834.3 384.69L871.69 347.3M835.8 386.19L873.19 348.8M837.3 387.69L874.69 350.3M838.8 389.19L876.19 351.8M840.3 390.69L877.69 353.3M841.8 392.19L879.19 354.8M843.3 393.69L880.69 356.3M844.8 395.19L882.19 357.8M846.3 396.69L883.69 359.3M847.8 398.19L885.19 360.8M849.3 399.69L886.69 362.3" stroke="#c4c4c4" stroke-width="0.7" fill="none"/>
<clipPath id="c21"><path d="M871.8 236.5L877.8 236.5L879.2 237.8L879.2 369.4L877.8 370.7L871.8 370.7L871.8 351.7L873.2 351.7L873.2 255.5L871.8 255.5Z"/></clipPath>
<path clip-path="url(#c21)" d="M885.65 206.05L973.33 310.54M883.51 207.85L971.18 312.34M881.36 209.65L969.04 314.14M879.22 211.45L966.89 315.94M877.07 213.25L964.75 317.74M874.93 215.05L962.6 319.54M872.78 216.85L960.46 321.34M870.64 218.65L958.31 323.14M868.49 220.45L956.17 324.94M866.35 222.25L954.02 326.74M864.2 224.05L951.88 328.54M862.06 225.85L949.73 330.34M859.91 227.65L947.59 332.14M857.77 229.45L945.44 333.94M855.62 231.25L943.3 335.74M853.48 233.05L941.16 337.54M851.33 234.85L939.01 339.34M849.19 236.65L936.87 341.14M847.04 238.45L934.72 342.94M844.9 240.25L932.58 344.74M842.75 242.05L930.43 346.54M840.61 243.85L928.29 348.34M838.46 245.65L926.14 350.14M836.32 247.45L924 351.94M834.17 249.25L921.85 353.74M832.03 251.05L919.71 355.54M829.88 252.85L917.56 357.34M827.74 254.65L915.42 359.14M825.59 256.45L913.27 360.94M823.45 258.25L911.13 362.74M821.3 260.05L908.98 364.54M819.16 261.85L906.84 366.34M817.01 263.65L904.69 368.14M814.87 265.45L902.55 369.94M812.72 267.25L900.4 371.74M810.58 269.04L898.26 373.54M808.43 270.84L896.11 375.34M806.29 272.64L893.97 377.14M804.14 274.44L891.82 378.94M802 276.24L889.68 380.74M799.85 278.04L887.53 382.54M797.71 279.84L885.39 384.34M795.56 281.64L883.24 386.13M793.42 283.44L881.1 387.93M791.27 285.24L878.95 389.73M789.13 287.04L876.81 391.53M786.98 288.84L874.66 393.33M784.84 290.64L872.52 395.13M782.69 292.44L870.37 396.93M780.55 294.24L868.23 398.73M778.4 296.04L866.08 400.53" stroke="#a4a4a4" stroke-width="0.45" fill="none"/>
<clipPath id="c22"><path d="M836.3 256L859.6 256L859.6 264L836.3 264Z"/></clipPath>
<path d="M836.3 256L859.6 256L859.6 264L836.3 264Z" fill="#ebebeb" stroke="none"/>
<path clip-path="url(#c22)" d="M829.55 260.44L848.39 241.6M831.05 261.94L849.89 243.1M832.55 263.44L851.39 244.6M834.05 264.94L852.89 246.1M835.55 266.44L854.39 247.6M837.05 267.94L855.89 249.1M838.55 269.44L857.39 250.6M840.05 270.94L858.89 252.1M841.55 272.44L860.39 253.6M843.05 273.94L861.89 255.1M844.55 275.44L863.39 256.6M846.05 276.94L864.89 258.1M847.55 278.44L866.39 259.6M849.05 279.94L867.89 261.1" stroke="#bcbcbc" stroke-width="0.7" fill="none"/>
<clipPath id="c23"><path d="M836.3 343.2L859.6 343.2L859.6 351.2L836.3 351.2Z"/></clipPath>
<path d="M836.3 343.2L859.6 343.2L859.6 351.2L836.3 351.2Z" fill="#ebebeb" stroke="none"/>
<path clip-path="url(#c23)" d="M829.45 347.54L848.29 328.7M830.95 349.04L849.79 330.2M832.45 350.54L851.29 331.7M833.95 352.04L852.79 333.2M835.45 353.54L854.29 334.7M836.95 355.04L855.79 336.2M838.45 356.54L857.29 337.7M839.95 358.04L858.79 339.2M841.45 359.54L860.29 340.7M842.95 361.04L861.79 342.2M844.45 362.54L863.29 343.7M845.95 364.04L864.79 345.2M847.45 365.54L866.29 346.7M848.95 367.04L867.79 348.2" stroke="#bcbcbc" stroke-width="0.7" fill="none"/>
<clipPath id="c24"><path d="M836.3 275L859.6 275L859.6 281.2L836.3 281.2Z"/></clipPath>
<path d="M836.3 275L859.6 275L859.6 281.2L836.3 281.2Z" fill="#ebebeb" stroke="none"/>
<path clip-path="url(#c24)" d="M829.69 278.3L848.15 259.84M831.19 279.8L849.65 261.34M832.69 281.3L851.15 262.84M834.19 282.8L852.65 264.34M835.69 284.3L854.15 265.84M837.19 285.8L855.65 267.34M838.69 287.3L857.15 268.84M840.19 288.8L858.65 270.34M841.69 290.3L860.15 271.84M843.19 291.8L861.65 273.34M844.69 293.3L863.15 274.84M846.19 294.8L864.65 276.34M847.69 296.3L866.15 277.84M849.19 297.8L867.65 279.34" stroke="#bcbcbc" stroke-width="0.7" fill="none"/>
<clipPath id="c25"><path d="M836.3 326L859.6 326L859.6 332.2L836.3 332.2Z"/></clipPath>
<path d="M836.3 326L859.6 326L859.6 332.2L836.3 332.2Z" fill="#ebebeb" stroke="none"/>
<path clip-path="url(#c25)" d="M829.69 329.3L848.15 310.84M831.19 330.8L849.65 312.34M832.69 332.3L851.15 313.84M834.19 333.8L852.65 315.34M835.69 335.3L854.15 316.84M837.19 336.8L855.65 318.34M838.69 338.3L857.15 319.84M840.19 339.8L858.65 321.34M841.69 341.3L860.15 322.84M843.19 342.8L861.65 324.34M844.69 344.3L863.15 325.84M846.19 345.8L864.65 327.34M847.69 347.3L866.15 328.84M849.19 348.8L867.65 330.34" stroke="#bcbcbc" stroke-width="0.7" fill="none"/>
<circle class="l" cx="842.4" cy="268.9" r="5.1" fill="#fff"/>
<circle class="l" cx="842.4" cy="338.3" r="5.1" fill="#fff"/>
<circle class="l" cx="853.6" cy="268.9" r="5.1" fill="#fff"/>
<circle class="l" cx="853.6" cy="338.3" r="5.1" fill="#fff"/>
<path class="l" d="M842.4 264L842.4 274"/>
<path class="l" d="M842.4 343.2L842.4 333.2"/>
<path class="l" d="M853.6 264L853.6 274"/>
<path class="l" d="M853.6 343.2L853.6 333.2"/>
<path class="l" d="M837 268.9L859 268.9"/>
<path class="l" d="M837 338.3L859 338.3"/>
<path class="dk" d="M838.5 273.6L857.5 273.6"/>
<path class="dk" d="M838.5 333.6L857.5 333.6"/>
<path class="m" d="M817.4 267L817.4 237.8L818.6 236.5L834 236.5L834 247.4L862 247.4L862 236.5L877.8 236.5L879.2 237.8L879.2 303.6"/>
<path class="m" d="M817.4 340.2L817.4 369.4L818.6 370.7L834 370.7L834 359.8L862 359.8L862 370.7L877.8 370.7L879.2 369.4L879.2 303.6"/>
<path class="kk" d="M824.6 236.5L824.6 256"/>
<path class="kk" d="M824.6 370.7L824.6 351.2"/>
<path class="kk" d="M871.8 236.5L871.8 256"/>
<path class="kk" d="M871.8 370.7L871.8 351.2"/>
<path class="kk" d="M824.6 236.6L834 236.6"/>
<path class="kk" d="M824.6 370.6L834 370.6"/>
<path class="kk" d="M862 236.6L871.8 236.6"/>
<path class="kk" d="M862 370.6L871.8 370.6"/>
<path class="k" d="M834 236.5L834 247.4L862 247.4L862 236.5"/>
<path class="k" d="M834 370.7L834 359.8L862 359.8L862 370.7"/>
<path class="g2" d="M824.6 255.7L872 255.7"/>
<path class="g2" d="M824.6 351.5L872 351.5"/>
<path class="k" d="M824.6 256L827.4 256L827.4 276.6"/>
<path class="k" d="M824.6 351.2L827.4 351.2L827.4 330.6"/>
<path class="m" d="M817.4 267L821 267"/>
<path class="m" d="M817.4 340.2L821 340.2"/>
<path class="m" d="M873.2 256L873.2 351.2"/>
<path class="m" d="M869 258L869 349.2"/>
<path class="k" d="M868 256L873.2 256"/>
<path class="k" d="M868 351.2L873.2 351.2"/>
<path class="l" d="M864.8 258L864.8 349"/>
<path class="l" d="M836.3 256L836.3 264"/>
<path class="l" d="M836.3 351.2L836.3 343.2"/>
<path class="l" d="M859.6 256L859.6 275"/>
<path class="l" d="M859.6 351.2L859.6 332.2"/>
<path class="k" d="M820.6 268.7L820.6 275.7L827.4 275.7"/>
<path class="k" d="M820.6 338.5L820.6 331.5L827.4 331.5"/>
<path class="kk" d="M821.2 274.8L827 274.8"/>
<path class="kk" d="M821.2 332.4L827 332.4"/>
<path class="m" d="M822 270.2L826.4 270.2"/>
<path class="m" d="M822 337L826.4 337"/>
<path class="m" d="M820.6 268.7L827.4 268.7"/>
<path class="m" d="M820.6 338.5L827.4 338.5"/>
<path class="m" d="M814.8 258.4 L807.4 258.4 Q806 258.4 806 259.8 L806 272.6 Q806 274 807.4 274 L814.8 274Z" fill="#f4f4f4"/>
<path class="m" d="M814.8 348.8 L807.4 348.8 Q806 348.8 806 347.4 L806 334.6 Q806 333.2 807.4 333.2 L814.8 333.2Z" fill="#f4f4f4"/>
<path class="m" d="M806 262.2L814.8 262.2"/>
<path class="m" d="M806 345L814.8 345"/>
<path class="m" d="M806 270.2L814.8 270.2"/>
<path class="m" d="M806 337L814.8 337"/>
<rect class="m" x="814.8" y="259.4" width="2.4" height="13.6"/>
<rect class="m" x="814.8" y="334.2" width="2.4" height="13.6"/>
<path class="l" d="M810.4 258.4L810.4 274"/>
<path class="l" d="M810.4 348.8L810.4 333.2"/>
<rect class="l" x="803.2" y="261.4" width="2.8" height="9.6" fill="#e8e8e8"/>
<rect class="l" x="803.2" y="336.2" width="2.8" height="9.6" fill="#e8e8e8"/>
<path class="l" d="M879.2 258 L882.4 258 Q883.7 258 883.7 259.4 L883.7 273.3 Q883.7 274.700 882.4 274.700 L879.2 274.700" fill="#f6f6f6"/>
<path class="l" d="M879.2 349.2 L882.4 349.2 Q883.7 349.2 883.7 347.8 L883.7 333.9 Q883.7 332.5 882.4 332.5 L879.2 332.5" fill="#f6f6f6"/>
<path class="l" d="M879.2 263L883.7 263"/>
<path class="l" d="M879.2 344.2L883.7 344.2"/>
<path class="l" d="M879.2 269.6L883.7 269.6"/>
<path class="l" d="M879.2 337.6L883.7 337.6"/>
<path class="k" d="M836.8 281.3L860.6 281.3"/>
<path class="k" d="M836.8 325.9L860.6 325.9"/>
<path class="m" d="M836 276.6L836 330.6"/>
<path class="m" d="M838.9 281.3L838.9 325.9"/>
<path class="kk" d="M860.4 278L860.4 329.2"/>
<path class="t" d="M848 283L848 324"/>
<path class="t" d="M822.7 276.6L822.7 330.6"/>
<text x="793.9" y="302.4" font-size="2.7" fill="#2a3240" transform="rotate(-90 793.9 302.4)" textLength="5.6" lengthAdjust="spacingAndGlyphs" stroke="#2a3240" stroke-width="0.22">Ø60k6</text>
<text x="793.9" y="310.2" font-size="2.7" fill="#2a3240" transform="rotate(-90 793.9 310.2)" textLength="5" lengthAdjust="spacingAndGlyphs" stroke="#2a3240" stroke-width="0.22">Ø55h</text>
<text x="804.5" y="302.4" font-size="2.7" fill="#2a3240" transform="rotate(-90 804.5 302.4)" textLength="5.6" lengthAdjust="spacingAndGlyphs" stroke="#2a3240" stroke-width="0.22">Ø60k6</text>
<text x="804.5" y="310.2" font-size="2.7" fill="#2a3240" transform="rotate(-90 804.5 310.2)" textLength="5" lengthAdjust="spacingAndGlyphs" stroke="#2a3240" stroke-width="0.22">Ø55h</text>
<text x="822.9" y="302.4" font-size="2.7" fill="#2a3240" transform="rotate(-90 822.9 302.4)" textLength="5.6" lengthAdjust="spacingAndGlyphs" stroke="#2a3240" stroke-width="0.22">Ø60k6</text>
<text x="822.9" y="310.2" font-size="2.7" fill="#2a3240" transform="rotate(-90 822.9 310.2)" textLength="5" lengthAdjust="spacingAndGlyphs" stroke="#2a3240" stroke-width="0.22">Ø55h</text>
<text x="847.9" y="302.4" font-size="2.7" fill="#2a3240" transform="rotate(-90 847.9 302.4)" textLength="5.6" lengthAdjust="spacingAndGlyphs" stroke="#2a3240" stroke-width="0.22">Ø60k6</text>
<text x="847.9" y="310.2" font-size="2.7" fill="#2a3240" transform="rotate(-90 847.9 310.2)" textLength="5" lengthAdjust="spacingAndGlyphs" stroke="#2a3240" stroke-width="0.22">Ø55h</text>
<text x="374.4" y="365.6" font-size="8.6" fill="#2e3642" textLength="11" lengthAdjust="spacingAndGlyphs">Е-Е</text>
<clipPath id="c26"><path d="M356.3 375.5L405.7 375.5L405.7 380.9L356.3 380.9Z"/></clipPath>
<path d="M356.3 375.5L405.7 375.5L405.7 380.9L356.3 380.9Z" fill="#f1f1f1" stroke="none"/>
<path clip-path="url(#c26)" d="M343.62 377.37L380.17 340.82M345.12 378.87L381.67 342.32M346.62 380.37L383.17 343.82M348.12 381.87L384.67 345.32M349.62 383.37L386.17 346.82M351.12 384.87L387.67 348.32M352.62 386.37L389.17 349.82M354.12 387.87L390.67 351.32M355.62 389.37L392.17 352.82M357.12 390.87L393.67 354.32M358.62 392.37L395.17 355.82M360.12 393.87L396.67 357.32M361.62 395.37L398.17 358.82M363.12 396.87L399.67 360.32M364.62 398.37L401.17 361.82M366.12 399.87L402.67 363.32M367.62 401.37L404.17 364.82M369.12 402.87L405.67 366.32M370.62 404.37L407.17 367.82M372.12 405.87L408.67 369.32M373.62 407.37L410.17 370.82M375.12 408.87L411.67 372.32M376.62 410.37L413.17 373.82M378.12 411.87L414.67 375.32M379.62 413.37L416.17 376.82M381.12 414.87L417.67 378.32M382.62 416.37L419.17 379.82" stroke="#c4c4c4" stroke-width="0.7" fill="none"/>
<clipPath id="c27"><path d="M356.3 391L405.7 391L405.7 395.7L356.3 395.7Z"/></clipPath>
<path d="M356.3 391L405.7 391L405.7 395.7L356.3 395.7Z" fill="#f1f1f1" stroke="none"/>
<path clip-path="url(#c27)" d="M343.57 392.42L380.07 355.92M345.07 393.92L381.57 357.42M346.57 395.42L383.07 358.92M348.07 396.92L384.57 360.42M349.57 398.42L386.07 361.92M351.07 399.92L387.57 363.42M352.57 401.42L389.07 364.92M354.07 402.92L390.57 366.42M355.57 404.42L392.07 367.92M357.07 405.92L393.57 369.42M358.57 407.42L395.07 370.92M360.07 408.92L396.57 372.42M361.57 410.42L398.07 373.92M363.07 411.92L399.57 375.42M364.57 413.42L401.07 376.92M366.07 414.92L402.57 378.42M367.57 416.42L404.07 379.92M369.07 417.92L405.57 381.42M370.57 419.42L407.07 382.92M372.07 420.92L408.57 384.42M373.57 422.42L410.07 385.92M375.07 423.92L411.57 387.42M376.57 425.42L413.07 388.92M378.07 426.92L414.57 390.42M379.57 428.42L416.07 391.92M381.07 429.92L417.57 393.42M382.57 431.42L419.07 394.92" stroke="#c4c4c4" stroke-width="0.7" fill="none"/>
<clipPath id="c28"><path d="M350.5 395.7L405.5 395.7L402 400.7L394 399.5L380 401L366 399.5L356 400.7Z"/></clipPath>
<path clip-path="url(#c28)" d="M383.26 356.56L420.06 400.42M381.12 358.36L417.92 402.22M378.97 360.16L415.77 404.02M376.83 361.96L413.63 405.82M374.68 363.76L411.48 407.62M372.54 365.56L409.34 409.42M370.39 367.36L407.19 411.22M368.25 369.16L405.05 413.02M366.1 370.96L402.9 414.82M363.96 372.76L400.76 416.62M361.81 374.56L398.61 418.42M359.67 376.36L396.47 420.22M357.52 378.16L394.33 422.02M355.38 379.96L392.18 423.82M353.23 381.76L390.04 425.62M351.09 383.56L387.89 427.42M348.94 385.36L385.75 429.22M346.8 387.16L383.6 431.02M344.65 388.96L381.46 432.82M342.51 390.76L379.31 434.62M340.36 392.56L377.17 436.42M338.22 394.36L375.02 438.22M336.07 396.16L372.88 440.02" stroke="#a4a4a4" stroke-width="0.45" fill="none"/>
<path class="kk" d="M356.3 375.5L405.7 375.5"/>
<path class="kk" d="M350.3 381.4L411 381.4"/>
<path class="k" d="M350.3 391L411 391"/>
<path class="m" d="M356.3 395.7L405.7 395.7"/>
<path class="kk" d="M356.3 375.5L356.3 381.4"/>
<path class="kk" d="M405.7 375.5L405.7 381.4"/>
<path class="kk" d="M356.3 391L356.3 396"/>
<path class="kk" d="M405.7 391L405.7 396"/>
<path class="cl2" d="M341.9 386.3L426 386.3"/>
<rect class="l" x="344.7" y="378.3" width="5.6" height="16.1" fill="#f6f6f6"/>
<path class="l" d="M344.7 382.5L350.3 382.5"/>
<path class="l" d="M344.7 390L350.3 390"/>
<path class="m" d="M350.3 377L350.3 410.5"/>
<path class="m" d="M411 379L411 410.5"/>
<path class="m" d="M350.3 410.1L411 410.1"/>
<text x="378.5" y="409.1" font-size="3" fill="#2c3440" stroke="#2c3440" stroke-width="0.22">68</text>
<path class="l" d="M350.300 377 L354 375.5 L356.3 375.5 M405.7 375.5 L408 375.5 L411 379"/>
<rect class="m" x="411" y="379" width="3" height="14.4" fill="#bbb"/>
<path class="l2" d="M414 378.3 L418.5 378.3 Q419.7 378.3 419.7 379.5 L419.7 392.5 Q419.7 393.7 418.5 393.7 L414 393.7Z" fill="#f6f6f6"/>
<path class="l" d="M414 382.5L419.7 382.5"/>
<path class="l" d="M414 390L419.7 390"/>
<rect class="m" x="419.7" y="382" width="4.3" height="8.6"/>
<path class="t" d="M423 382L423 390.6"/>
<path class="m" d="M401.5 381.4L401.5 391"/>
<path class="m" d="M401.5 383.5L411 383.5"/>
<path class="m" d="M401.5 389.3L411 389.3"/>
<path class="m" d="M369.2 396L369.2 400"/>
<path class="m" d="M392.4 396L392.4 400"/>
<path class="l" d="M350.300 395.700 L350.300 399 Q353 401 356 400.700 M402 400.700 Q408 399 411 395"/>
<circle class="l" cx="446.5" cy="483.9" r="67.5"/>
<path class="l" d="M446.5 427.4A56.5 56.5 0 0 1 446.5 540.4"/>
<clipPath id="c29"><path d="M446.5 540.4A56.5 56.5 0 0 1 446.5 427.4L446.5 437.2A46.7 46.7 0 0 0 446.5 530.6Z"/></clipPath>
<path clip-path="url(#c29)" d="M331.39 483.2L445.8 368.79M332.8 484.61L447.21 370.2M334.21 486.03L448.63 371.61M335.63 487.44L450.04 373.03M337.04 488.86L451.46 374.44M338.46 490.27L452.87 375.86M339.87 491.69L454.29 377.27M341.29 493.1L455.7 378.69M342.7 494.51L457.11 380.1M344.11 495.93L458.53 381.51M345.53 497.34L459.94 382.93M346.94 498.76L461.36 384.34M348.36 500.17L462.77 385.76M349.77 501.59L464.19 387.17M351.19 503L465.6 388.59M352.6 504.41L467.01 390M354.01 505.83L468.43 391.41M355.43 507.24L469.84 392.83M356.84 508.66L471.26 394.24M358.26 510.07L472.67 395.66M359.67 511.48L474.08 397.07M361.08 512.9L475.5 398.48M362.5 514.31L476.91 399.9M363.91 515.73L478.33 401.31M365.33 517.14L479.74 402.73M366.74 518.56L481.16 404.14M368.16 519.97L482.57 405.56M369.57 521.38L483.98 406.97M370.98 522.8L485.4 408.38M372.4 524.21L486.81 409.8M373.81 525.63L488.23 411.21M375.23 527.04L489.64 412.63M376.64 528.46L491.06 414.04M378.06 529.87L492.47 415.46M379.47 531.28L493.88 416.87M380.88 532.7L495.3 418.28M382.3 534.11L496.71 419.7M383.71 535.53L498.13 421.11M385.13 536.94L499.54 422.53M386.54 538.35L500.95 423.94M387.95 539.77L502.37 425.35M389.37 541.18L503.78 426.77M390.78 542.6L505.2 428.18M392.2 544.01L506.61 429.6M393.61 545.43L508.03 431.01M395.03 546.84L509.44 432.43M396.44 548.25L510.85 433.84M397.85 549.67L512.27 435.25M399.27 551.08L513.68 436.67M400.68 552.5L515.1 438.08M402.1 553.91L516.51 439.5M403.51 555.33L517.93 440.91M404.93 556.74L519.34 442.33M406.34 558.15L520.75 443.74M407.75 559.57L522.17 445.15M409.17 560.98L523.58 446.57M410.58 562.4L525 447.98M412 563.81L526.41 449.4M413.41 565.22L527.82 450.81M414.82 566.64L529.24 452.22M416.24 568.05L530.65 453.64M417.65 569.47L532.07 455.05M419.07 570.88L533.48 456.47M420.48 572.3L534.9 457.88M421.9 573.71L536.31 459.3M423.31 575.12L537.72 460.71M424.72 576.54L539.14 462.12M426.14 577.95L540.55 463.54M427.55 579.37L541.97 464.95M428.97 580.78L543.38 466.37M430.38 582.2L544.8 467.78M431.8 583.61L546.21 469.2M433.21 585.02L547.62 470.61M434.62 586.44L549.04 472.02M436.04 587.85L550.45 473.44M437.45 589.27L551.87 474.85M438.87 590.68L553.28 476.27M440.28 592.1L554.7 477.68M441.7 593.51L556.11 479.1M443.11 594.92L557.52 480.51M444.52 596.34L558.94 481.92M445.94 597.75L560.35 483.34M447.35 599.17L561.77 484.75" stroke="#9a9a9a" stroke-width="0.45" fill="none"/>
<clipPath id="c30"><path d="M446.5 530.6A46.7 46.7 0 0 1 446.5 437.2L446.5 445.2A38.7 38.7 0 0 0 446.5 522.6Z"/></clipPath>
<path clip-path="url(#c30)" d="M456.88 387.67L543.07 490.39M454.73 389.47L540.92 492.19M452.59 391.27L538.78 493.99M450.44 393.07L536.63 495.79M448.3 394.87L534.49 497.59M446.16 396.67L532.34 499.39M444.01 398.47L530.2 501.19M441.87 400.27L528.05 502.99M439.72 402.07L525.91 504.79M437.58 403.87L523.77 506.59M435.43 405.67L521.62 508.39M433.29 407.47L519.48 510.19M431.14 409.27L517.33 511.99M429 411.07L515.19 513.79M426.85 412.87L513.04 515.59M424.71 414.67L510.9 517.39M422.56 416.47L508.75 519.18M420.42 418.27L506.61 520.98M418.27 420.07L504.46 522.78M416.13 421.87L502.32 524.58M413.98 423.67L500.17 526.38M411.84 425.47L498.03 528.18M409.69 427.27L495.88 529.98M407.55 429.07L493.74 531.78M405.4 430.87L491.59 533.58M403.26 432.67L489.45 535.38M401.11 434.47L487.3 537.18M398.97 436.27L485.16 538.98M396.82 438.07L483.01 540.78M394.68 439.87L480.87 542.58M392.53 441.67L478.72 544.38M390.39 443.46L476.58 546.18M388.24 445.26L474.43 547.98M386.1 447.06L472.29 549.78M383.95 448.86L470.14 551.58M381.81 450.66L468 553.38M379.66 452.46L465.85 555.18M377.52 454.26L463.71 556.98M375.37 456.06L461.56 558.78M373.23 457.86L459.42 560.58M371.08 459.66L457.27 562.38M368.94 461.46L455.13 564.18M366.79 463.26L452.98 565.98M364.65 465.06L450.84 567.78M362.5 466.86L448.69 569.58M360.36 468.66L446.55 571.38M358.21 470.46L444.4 573.18M356.07 472.26L442.26 574.98M353.92 474.06L440.11 576.78M351.78 475.86L437.97 578.58" stroke="#a4a4a4" stroke-width="0.45" fill="none"/>
<clipPath id="c31"><path d="M446.5 512.2A28.3 28.3 0 0 1 446.5 455.6L446.5 462.8A21.1 21.1 0 0 0 446.5 505Z"/></clipPath>
<path clip-path="url(#c31)" d="M452.16 425.6L504.89 488.45M450.01 427.4L502.75 490.25M447.87 429.2L500.6 492.05M445.72 431L498.46 493.85M443.58 432.8L496.31 495.65M441.43 434.6L494.17 497.45M439.29 436.4L492.02 499.25M437.14 438.2L489.88 501.05M435 440L487.73 502.85M432.85 441.8L485.59 504.65M430.71 443.6L483.44 506.45M428.56 445.4L481.3 508.25M426.42 447.2L479.15 510.05M424.27 449L477.01 511.85M422.13 450.8L474.86 513.65M419.98 452.6L472.72 515.45M417.84 454.4L470.58 517.25M415.69 456.2L468.43 519.05M413.55 458L466.29 520.85M411.4 459.8L464.14 522.65M409.26 461.6L462 524.45M407.11 463.4L459.85 526.25M404.97 465.2L457.71 528.05M402.82 467L455.56 529.85M400.68 468.8L453.42 531.65M398.53 470.6L451.27 533.45M396.39 472.4L449.13 535.25M394.24 474.2L446.98 537.05M392.1 476L444.84 538.85M389.95 477.8L442.69 540.65M387.81 479.6L440.55 542.45" stroke="#a4a4a4" stroke-width="0.45" fill="none"/>
<path class="l" d="M446.5 540.4A56.5 56.5 0 0 1 446.5 427.4"/>
<path class="l" d="M446.5 530.6A46.7 46.7 0 0 1 446.5 437.2"/>
<path class="l" d="M446.5 522.6A38.7 38.7 0 0 1 446.5 445.2"/>
<path class="l" d="M446.5 512.2A28.3 28.3 0 0 1 446.5 455.6"/>
<path class="l" d="M446.5 505A21.1 21.1 0 0 1 446.5 462.8"/>
<path class="l" d="M446.5 517.4A33.5 33.5 0 0 1 446.5 450.4"/>
<circle class="l" cx="440.68" cy="516.89" r="5.1" fill="#fff"/>
<circle class="l" cx="430.77" cy="513.48" r="5.1" fill="#fff"/>
<circle class="l" cx="422.4" cy="507.17" r="5.1" fill="#fff"/>
<circle class="l" cx="416.39" cy="498.59" r="5.1" fill="#fff"/>
<circle class="l" cx="413.33" cy="488.56" r="5.1" fill="#fff"/>
<circle class="l" cx="413.51" cy="478.08" r="5.1" fill="#fff"/>
<circle class="l" cx="416.92" cy="468.17" r="5.1" fill="#fff"/>
<circle class="l" cx="423.23" cy="459.8" r="5.1" fill="#fff"/>
<circle class="l" cx="431.81" cy="453.79" r="5.1" fill="#fff"/>
<circle class="l" cx="441.84" cy="450.73" r="5.1" fill="#fff"/>
<clipPath id="c32"><path d="M398.8 446 A8 8 0 1 1 413.5 440Z"/></clipPath>
<path clip-path="url(#c32)" d="M387.57 443.99L406.49 425.07M388.98 445.4L407.9 426.48M390.4 446.82L409.32 427.9M391.81 448.23L410.73 429.31M393.22 449.65L412.15 430.72M394.64 451.06L413.56 432.14M396.05 452.47L414.97 433.55M397.47 453.89L416.39 434.97M398.88 455.3L417.8 436.38M400.3 456.72L419.22 437.8M401.71 458.13L420.63 439.21M403.12 459.55L422.05 440.62M404.54 460.96L423.46 442.04M405.95 462.37L424.87 443.45M407.37 463.79L426.29 444.87" stroke="#9a9a9a" stroke-width="0.45" fill="none"/>
<path class="l" d="M398.8 446 A8 8 0 1 1 413.5 440"/>
<circle class="l" cx="406.5" cy="444" r="3.2"/>
<path class="m" d="M400 444L413 444"/>
<path class="m" d="M406.5 437.5L406.5 450.5"/>
<clipPath id="c33"><path d="M396 517L384 532L383.3 540L388.6 545L407 537.5L420 533L412 520L404 514Z"/></clipPath>
<path clip-path="url(#c33)" d="M365.27 528.51L400.66 493.12M366.69 529.92L402.07 494.54M368.1 531.34L403.49 495.95M369.52 532.75L404.9 497.37M370.93 534.17L406.32 498.78M372.35 535.58L407.73 500.2M373.76 536.99L409.14 501.61M375.17 538.41L410.56 503.02M376.59 539.82L411.97 504.44M378 541.24L413.39 505.85M379.42 542.65L414.8 507.27M380.83 544.06L416.21 508.68M382.25 545.48L417.63 510.1M383.66 546.89L419.04 511.51M385.07 548.31L420.46 512.92M386.49 549.72L421.87 514.34M387.9 551.14L423.29 515.75M389.32 552.55L424.7 517.17M390.73 553.96L426.11 518.58M392.14 555.38L427.53 519.99M393.56 556.79L428.94 521.41M394.97 558.21L430.36 522.82M396.39 559.62L431.77 524.24M397.8 561.04L433.19 525.65M399.22 562.45L434.6 527.07M400.63 563.86L436.01 528.48M402.04 565.28L437.43 529.89" stroke="#9a9a9a" stroke-width="0.45" fill="none"/>
<path class="l" d="M396 517 L384 532 M388.6 554 L388.6 545 L405 537.500"/>
<circle class="l" cx="406.5" cy="524.4" r="3.2"/>
<path class="m" d="M400 524.4L413 524.4"/>
<path class="m" d="M406.5 517.9L406.5 530.9"/>
<path class="l2" d="M494 444L490.25 450.5L482.75 450.5L479 444L482.75 437.5L490.25 437.5Z"/>
<circle class="l2" cx="486.5" cy="444" r="6.4"/>
<path class="k" d="M476 444L496.8 444"/>
<path class="k" d="M486.5 433.5L486.5 454.5"/>
<path class="l2" d="M494 524.4L490.25 530.9L482.75 530.9L479 524.4L482.75 517.9L490.25 517.9Z"/>
<circle class="l2" cx="486.5" cy="524.4" r="6.4"/>
<path class="k" d="M476 524.4L496.8 524.4"/>
<path class="k" d="M486.5 513.9L486.5 534.9"/>
<path class="cl3" d="M446.5 411.2L446.5 559.2"/>
<path class="g3" d="M375.8 483.7L550.7 483.7"/>
<path class="m" d="M379.5 483.7L379.5 531.3"/>
<path class="k" d="M514.1 483.7L514.1 531.1"/>
<path class="m" d="M550.7 483.7L550.7 556.4"/>
<text x="549.4" y="521.4" font-size="3" fill="#2c3440" transform="rotate(-90 549.4 521.4)" stroke="#2c3440" stroke-width="0.22">110</text>
<path class="l" d="M514.100 531 L541.6 531 M510.400 531 L514 531 M510.400 531 L497.6 543.600 L497.6 554.400"/>
<path class="t" d="M541.6 531L541.6 556.3"/>
<path class="m" d="M523.2 528.4L523.2 573.1"/>
<path class="m" d="M518.4 556.3L550.7 556.3"/>
<rect class="m" x="375.2" y="554.4" width="143.2" height="10.4"/>
<clipPath id="c34"><path d="M351.3 533.2L357.1 533.2L357.1 556.4L351.3 556.4Z"/></clipPath>
<path d="M351.3 533.2L357.1 533.2L357.1 556.4L351.3 556.4Z" fill="#f1f1f1" stroke="none"/>
<path clip-path="url(#c34)" d="M335.53 544.46L353.86 526.13M337.03 545.96L355.36 527.63M338.53 547.46L356.86 529.13M340.03 548.96L358.36 530.63M341.53 550.46L359.86 532.13M343.03 551.96L361.36 533.63M344.53 553.46L362.86 535.13M346.03 554.96L364.36 536.63M347.53 556.46L365.86 538.13M349.03 557.96L367.36 539.63M350.53 559.46L368.86 541.13M352.03 560.96L370.36 542.63M353.53 562.46L371.86 544.13M355.03 563.96L373.36 545.63" stroke="#c4c4c4" stroke-width="0.7" fill="none"/>
<clipPath id="c35"><path d="M383.3 540L388.6 540L388.6 554.4L383.3 554.4Z"/></clipPath>
<path d="M383.3 540L388.6 540L388.6 554.4L383.3 554.4Z" fill="#f1f1f1" stroke="none"/>
<path clip-path="url(#c35)" d="M372.74 546.25L385 533.99M374.24 547.75L386.5 535.49M375.74 549.25L388 536.99M377.24 550.75L389.5 538.49M378.74 552.25L391 539.99M380.24 553.75L392.5 541.49M381.74 555.25L394 542.99M383.24 556.75L395.5 544.49M384.74 558.25L397 545.99M386.24 559.75L398.5 547.49M387.74 561.25L400 548.99" stroke="#c4c4c4" stroke-width="0.7" fill="none"/>
<path class="kk" d="M349.4 531.3L390.2 531.3"/>
<path class="m" d="M351.3 531.3L351.3 556.5L375.2 556.5"/>
<path class="m" d="M357.1 556.4L357.1 535.3L383.3 535.3L383.3 554.4"/>
<path class="m" d="M388.6 545L388.6 554.4"/>
<path class="m" d="M363.5 531.3L363.5 522L376.9 522L376.9 531.3"/>
<path class="m" d="M363.5 531.3L363.5 535.3"/>
<path class="m" d="M376.9 531.3L376.9 535.3"/>
<path class="m" d="M369.4 527.6L369.4 573.1"/>
<path class="m" d="M369.4 573.1L523.2 573.1"/>
<text x="344" y="513.4" font-size="3" fill="#2c3440" textLength="16" lengthAdjust="spacingAndGlyphs" stroke="#2c3440" stroke-width="0.22">4 отв. Ф17</text>
<path class="l" d="M344 514.2L360 514.2L369 523"/>
<path class="k" d="M349.7 523.6L349.7 536.4"/>
<text x="345.6" y="523.4" font-size="3" fill="#2c3440" stroke="#2c3440" stroke-width="0.22">Г</text>
<text x="444.2" y="563" font-size="3" fill="#2c3440" stroke="#2c3440" stroke-width="0.22">15a</text>
<text x="444.2" y="572.2" font-size="3" fill="#2c3440" stroke="#2c3440" stroke-width="0.22">510</text>
<path class="k" d="M384.3 580L384.3 590"/>
<text x="388" y="591.6" font-size="8.7" fill="#2e3642" textLength="3.6" lengthAdjust="spacingAndGlyphs">В</text>
<text x="466.3" y="465.6" font-size="7.9" fill="#2e3642" textLength="3.1" lengthAdjust="spacingAndGlyphs">Е</text>
<path class="m" d="M470.8 459.9L475.8 455.1"/>
<path class="t" d="M473.3 457.5L478.7 462.5"/>
<path class="n" d="M473.3 457.5 L476.3 459.4 L475.2 460.5Z" fill="#333"/>
<text x="503.2" y="428.7" font-size="7.9" fill="#2e3642" textLength="3.1" lengthAdjust="spacingAndGlyphs">Е</text>
<path class="m" d="M496.1 434.6L501.6 429.3"/>
<path class="t" d="M498.8 432L504.2 437.2"/>
<path class="n" d="M498.8 432 L501.8 433.9 L500.7 435Z" fill="#333"/>
<text x="627.1" y="453.4" font-size="7.8" fill="#2e3642" textLength="12" lengthAdjust="spacingAndGlyphs">Д-Д</text>
<clipPath id="c36"><path d="M582.5 502.3A41 41 0 1 0 664.5 502.3A41 41 0 1 0 582.5 502.3Z"/></clipPath>
<path clip-path="url(#c36)" d="M634.34 416.21L710.17 506.57M630.36 419.55L706.18 509.92M626.37 422.89L702.2 513.26M622.39 426.23L698.22 516.6M618.41 429.58L694.23 519.94M614.42 432.92L690.25 523.29M610.44 436.26L686.27 526.63M606.46 439.6L682.28 529.97M602.47 442.95L678.3 533.31M598.49 446.29L674.32 536.66M594.51 449.63L670.33 540M590.52 452.97L666.35 543.34M586.54 456.32L662.37 546.68M582.56 459.66L658.38 550.03M578.57 463L654.4 553.37M574.59 466.34L650.42 556.71M570.61 469.69L646.43 560.05M566.62 473.03L642.45 563.4M562.64 476.37L638.47 566.74M558.66 479.71L634.48 570.08M554.67 483.06L630.5 573.42M550.69 486.4L626.52 576.77M546.7 489.74L622.53 580.11M542.72 493.08L618.55 583.45M538.74 496.43L614.56 586.79" stroke="#a4a4a4" stroke-width="0.5" fill="none"/>
<circle class="l" cx="623.5" cy="502.3" r="41"/>
<circle class="l" cx="626" cy="502.3" r="28.5" fill="#fff"/>
<clipPath id="c37"><path d="M597.5 502.3A28.5 28.5 0 1 0 654.5 502.3A28.5 28.5 0 1 0 597.5 502.3Z"/></clipPath>
<path clip-path="url(#c37)" d="M566.34 506.16L619.44 442.88M568.34 507.83L621.44 444.55M570.33 509.51L623.43 446.22M572.32 511.18L625.42 447.89M574.31 512.85L627.41 449.56M576.3 514.52L629.4 451.24M578.29 516.19L631.4 452.91M580.29 517.86L633.39 454.58M582.28 519.53L635.38 456.25M584.27 521.2L637.37 457.92M586.26 522.88L639.36 459.59M588.25 524.55L641.35 461.26M590.24 526.22L643.35 462.93M592.24 527.89L645.34 464.61M594.23 529.56L647.33 466.28M596.22 531.23L649.32 467.95M598.21 532.9L651.31 469.62M600.2 534.57L653.3 471.29M602.2 536.25L655.3 472.96M604.19 537.92L657.29 474.63M606.18 539.59L659.28 476.3M608.17 541.26L661.27 477.98M610.16 542.93L663.26 479.65M612.15 544.6L665.25 481.32M614.15 546.27L667.25 482.99M616.14 547.94L669.24 484.66M618.13 549.62L671.23 486.33M620.12 551.29L673.22 488M622.11 552.96L675.21 489.67M624.1 554.63L677.2 491.35M626.1 556.3L679.2 493.02M628.09 557.97L681.19 494.69M630.08 559.64L683.18 496.36M632.07 561.31L685.17 498.03" stroke="#a4a4a4" stroke-width="0.45" fill="none"/>
<clipPath id="c38"><path d="M592.9 493.7L602.2 493.7L602.2 510.1L592.9 510.1Z"/></clipPath>
<path d="M592.9 493.7L602.2 493.7L602.2 510.1L592.9 510.1Z" fill="#ebebeb" stroke="none"/>
<path clip-path="url(#c38)" d="M582.45 501.54L597.19 486.8M583.95 503.04L598.69 488.3M585.45 504.54L600.19 489.8M586.95 506.04L601.69 491.3M588.45 507.54L603.19 492.8M589.95 509.04L604.69 494.3M591.45 510.54L606.19 495.8M592.95 512.04L607.69 497.3M594.45 513.54L609.19 498.8M595.95 515.04L610.69 500.3M597.45 516.54L612.19 501.8M598.95 518.04L613.69 503.3" stroke="#bcbcbc" stroke-width="0.7" fill="none"/>
<path class="cl3" d="M625.6 465.1L625.6 534"/>
<path class="cl3" d="M588 502.3L662.8 502.3"/>
<path class="k" d="M592.7 451.1L592.7 555.4"/>
<path class="k" d="M602.4 451.1L602.4 510.3"/>
<path class="m" d="M592.7 451.5L616.3 451.5"/>
<text x="604.5" y="450.6" font-size="3" fill="#2c3440" textLength="9" lengthAdjust="spacingAndGlyphs" stroke="#2c3440" stroke-width="0.22">14 H9</text>
<path class="m" d="M572.5 493.5L602.4 493.5"/>
<path class="m" d="M572.5 510.3L602.4 510.3"/>
<path class="l" d="M572.5 493.5L572.5 510.3"/>
<path class="m" d="M571.8 510.3L571.8 529"/>
<text x="571" y="529.5" font-size="3.2" fill="#2c3440" transform="rotate(-90 571 529.5)" textLength="14" lengthAdjust="spacingAndGlyphs" stroke="#2c3440" stroke-width="0.22">22.8 H14</text>
<path class="k" d="M654.6 502.3L654.6 555.4"/>
<path class="k" d="M592.7 555.4L654.6 555.4"/>
<text x="622" y="554.2" font-size="3" fill="#2c3440" stroke="#2c3440" stroke-width="0.22">68</text>
<text x="747.4" y="450.1" font-size="8.5" fill="#2e3642" textLength="3.9" lengthAdjust="spacingAndGlyphs">В</text>
<text x="851.7" y="450.1" font-size="8.5" fill="#2e3642" textLength="2.9" lengthAdjust="spacingAndGlyphs">Г</text>
<text x="716" y="446.9" font-size="2.8" fill="#2c3440" textLength="12" lengthAdjust="spacingAndGlyphs" stroke="#2c3440" stroke-width="0.22">2 отв. Ф8</text>
<text x="710" y="450.2" font-size="2.8" fill="#2c3440" textLength="26" lengthAdjust="spacingAndGlyphs" stroke="#2c3440" stroke-width="0.22">на обойме каждой</text>
<path class="t" d="M709.7 450.8L736.6 450.8"/>
<path class="l" d="M709.7 450.8L713 478"/>
<path class="m" d="M762.4 458.2L692.5 458.2L692.5 537.2L762.4 537.2"/>
<text x="691.4" y="500" font-size="3" fill="#2c3440" transform="rotate(-90 691.4 500)" stroke="#2c3440" stroke-width="0.22">160</text>
<path class="cl3" d="M705.4 493.7L899.7 493.7"/>
<path class="m" d="M735.5 472L707.6 472L707.6 558.7"/>
<path class="m" d="M707.6 517.2L735.5 517.2"/>
<path class="m" d="M707.6 558.7L897.1 558.7"/>
<text x="800" y="557.6" font-size="3" fill="#2c3440" stroke="#2c3440" stroke-width="0.22">280</text>
<path class="m" d="M715 476.300 L736.300 476.300 Q738.800 476.300 738.800 478.800 L738.800 508.800 Q738.800 511.300 736.300 511.300 L715 511.300 Q712.5 511.300 712.5 508.800 L712.5 478.800 Q712.5 476.300 715 476.300Z"/>
<circle class="l" cx="725.9" cy="493.7" r="6.5"/>
<path class="k" d="M725.9 485L725.9 502.5"/>
<circle class="l" cx="713.4" cy="478.4" r="3"/>
<path class="m" d="M709 478.4L719 478.4"/>
<path class="m" d="M713.4 472.5L713.4 484"/>
<path class="m" d="M731.9 472L731.9 476.3"/>
<path class="m" d="M731.9 511.3L731.9 517.2"/>
<path class="l" d="M735.5 465.1L870 465.1"/>
<path class="k" d="M735.5 470.5L870.6 470.5"/>
<path class="m" d="M735.5 465.1L735.5 472"/>
<path class="k" d="M735.5 517.2L870.6 517.2"/>
<path class="l" d="M735.5 523.4L870 523.4"/>
<path class="m" d="M735.5 517.2L735.5 523.4"/>
<path class="k" d="M802.5 479.7L870.6 479.7"/>
<path class="k" d="M802.5 508.8L870.6 508.8"/>
<path class="l" d="M870 465.100 Q871.500 465.100 871.500 466.600 L871.500 478.200 Q871.500 479.700 870 479.700 M870 523.400 Q871.500 523.400 871.500 521.900 L871.500 510.300 Q871.500 508.800 870 508.800"/>
<path class="m" d="M743.5 474L743.5 513.5"/>
<path class="l" d="M747.5 474L747.5 513.5"/>
<path class="l" d="M743.5 474 L767.800 474 L776.400 481.200 L802.5 481.200 M743.5 513.5 L767.800 513.5 L776.400 506.200 L802.5 506.200"/>
<path class="l" d="M747.5 476.300 L767 476.300 L775.600 483.500 L802.5 483.500 M747.5 511.200 L767 511.200 L775.600 504 L802.5 504"/>
<path class="cl3" d="M762.4 454.4L762.4 537.8"/>
<path class="cl3" d="M802.5 447.5L802.5 547.3"/>
<rect class="l" x="754.2" y="458.2" width="16.4" height="5.8" fill="#f4f4f4"/>
<path class="m" d="M758.5 458.2L758.5 464"/>
<path class="m" d="M766.3 458.2L766.3 464"/>
<path class="m" d="M755.700 524.200 L769.100 524.200 Q770.600 524.200 770.600 525.700 L770.600 532.900 Q770.600 534.400 769.100 534.400 L755.700 534.400 Q754.200 534.400 754.200 532.900 L754.200 525.700 Q754.200 524.200 755.700 524.200Z" fill="#f0f0f0"/>
<path class="m" d="M758.5 524.2L758.5 534.4"/>
<path class="m" d="M766.3 524.2L766.3 534.4"/>
<rect class="m" x="758.8" y="534.4" width="7.2" height="2.6"/>
<path class="l" d="M802.5 451 Q816 458 829.800 446.200"/>
<path class="k" d="M829.8 446.2L829.8 464"/>
<path class="k" d="M802.5 447.5L802.5 465"/>
<path class="l" d="M775.300 524 L775.300 540 Q790 536 802.5 545"/>
<path class="cl3" d="M842.7 451L842.7 531.8"/>
<path class="k" d="M836.200 454.400 L849.100 454.400 Q850.600 454.400 850.600 455.900 L850.600 462.500 Q850.600 464 849.100 464 L836.200 464 Q834.700 464 834.700 462.500 L834.700 455.900 Q834.700 454.400 836.200 454.400Z" fill="#eee"/>
<path class="m" d="M838.7 454.4L838.7 464"/>
<path class="m" d="M846.7 454.4L846.7 464"/>
<path class="m" d="M838.7 453.2L846.7 453.2"/>
<path class="m" d="M835.5 461.8L850 461.8"/>
<rect class="l" x="834.7" y="523.6" width="15.9" height="6.4" fill="#f6f6f6"/>
<path class="m" d="M838.7 523.6L838.7 530"/>
<path class="m" d="M846.7 523.6L846.7 530"/>
<path class="k" d="M833.7 479.7L833.7 508.8"/>
<path class="k" d="M853.4 479.7L853.4 508.8"/>
<path class="k" d="M859.2 479.7L859.2 508.8"/>
<path class="m" d="M870.6 471.6L919 471.6"/>
<path class="m" d="M870.6 517.2L919 517.2"/>
<path class="m" d="M919 471.6L919 517.2"/>
<text x="917.8" y="496" font-size="3" fill="#2c3440" transform="rotate(-90 917.8 496)" stroke="#2c3440" stroke-width="0.22">63</text>
<circle class="l" cx="878.8" cy="493.7" r="11.3"/>
<circle class="l" cx="878.8" cy="493.7" r="6"/>
<path class="k" d="M878.8 480.2L878.8 508"/>
<path class="t" d="M874 483L890 508"/>
<text x="891" y="510" font-size="2.4" fill="#2c3440" stroke="#2c3440" stroke-width="0.22">Ø30</text>
<circle class="l" cx="890.6" cy="477.6" r="3"/>
<path class="k" d="M884.6 478L907.8 478"/>
<path class="m" d="M890 461.9L890 481"/>
<path class="m" d="M897.1 461.9L897.1 558.7"/>
<path class="m" d="M884.6 461.9L890 461.9"/>
<path class="m" d="M897.1 461.9L903 461.9"/>
<text x="893.2" y="460" font-size="2.4" fill="#2c3440" stroke="#2c3440" stroke-width="0.22">8</text>
<path class="m" d="M907.2 466.2L907.2 471.6"/>
<path class="m" d="M907.2 478L907.2 483"/>
<text x="901" y="476.6" font-size="2.4" fill="#2c3440" stroke="#2c3440" stroke-width="0.22">8</text>
<rect class="k" x="790.4" y="564.6" width="136.1" height="40.9"/>
<path class="k" d="M796 564.6L796 605.5"/>
<path class="k" d="M803.7 564.6L803.7 605.5"/>
<path class="k" d="M820.8 564.6L820.8 605.5"/>
<path class="k" d="M831.5 564.6L831.5 605.5"/>
<path class="kk" d="M838.7 564.6L838.7 605.5"/>
<path class="k" d="M790.4 568.3L838.7 568.3"/>
<path class="k" d="M790.4 571.8L838.7 571.8"/>
<path class="k" d="M790.4 575.5L838.7 575.5"/>
<path class="k" d="M790.4 579L838.7 579"/>
<path class="k" d="M790.4 582.5L838.7 582.5"/>
<path class="k" d="M790.4 586.2L838.7 586.2"/>
<path class="k" d="M790.4 589.9L838.7 589.9"/>
<path class="k" d="M790.4 593.4L838.7 593.4"/>
<path class="k" d="M790.4 597.4L838.7 597.4"/>
<path class="k" d="M790.4 601.4L838.7 601.4"/>
<path class="k" d="M838.7 575.5L926.5 575.5"/>
<path class="k" d="M838.7 593.1L926.5 593.1"/>
<path class="k" d="M889.3 575.5L889.3 605.5"/>
<path class="m" d="M889.3 579L926.5 579"/>
<path class="k" d="M889.3 590.2L926.5 590.2"/>
<path class="k" d="M900.3 575.5L900.3 590.2"/>
<path class="k" d="M912.5 575.5L912.5 590.2"/>
<path class="m" d="M893 579L893 590.2"/>
<path class="m" d="M896.6 579L896.6 590.2"/>
<text x="857.6" y="571.8" font-size="4.6" fill="#1c2430" font-style="italic" textLength="42.4" lengthAdjust="spacingAndGlyphs">КСИ 201-05 10.00СБ</text>
<text x="845.3" y="585.4" font-size="4.6" fill="#4a5260" font-style="italic" textLength="34.7" lengthAdjust="spacingAndGlyphs">Вал приводной</text>
<text x="915.8" y="587" font-size="4" fill="#333c48" font-style="italic">1:1</text>
<text x="890.6" y="578.4" font-size="2.3" fill="#3a4250" stroke="#3a4250" stroke-width="0.22">Лит.</text>
<text x="902" y="578.4" font-size="2.3" fill="#3a4250" stroke="#3a4250" stroke-width="0.22">Масса</text>
<text x="913.2" y="578.4" font-size="2.3" fill="#3a4250" textLength="12.5" lengthAdjust="spacingAndGlyphs" stroke="#3a4250" stroke-width="0.22">Масштаб</text>
<text x="890.2" y="592.5" font-size="2.3" fill="#3a4250" stroke="#3a4250" stroke-width="0.22">Лист</text>
<text x="903" y="592.5" font-size="2.3" fill="#3a4250" stroke="#3a4250" stroke-width="0.22">Листов 1</text>
<text x="891" y="597.2" font-size="2.6" fill="#3a4250" font-style="italic" textLength="30" lengthAdjust="spacingAndGlyphs" stroke="#3a4250" stroke-width="0.1">МГТУ им. Н.Э. Баумана</text>
<text x="891" y="600.5" font-size="2.6" fill="#3a4250" font-style="italic" textLength="30" lengthAdjust="spacingAndGlyphs" stroke="#3a4250" stroke-width="0.1">каф. "Детали машин"</text>
<text x="891" y="603.8" font-size="2.6" fill="#3a4250" font-style="italic" stroke="#3a4250" stroke-width="0.1">группа РК-62</text>
<text x="790.8" y="581.8" font-size="2.2" fill="#333c48" textLength="12" lengthAdjust="spacingAndGlyphs" stroke="#333c48" stroke-width="0.22">Изм Лист</text>
<text x="804.3" y="581.8" font-size="2.2" fill="#333c48" textLength="15" lengthAdjust="spacingAndGlyphs" stroke="#333c48" stroke-width="0.22">№ докум.</text>
<text x="821.2" y="581.8" font-size="2.2" fill="#333c48" stroke="#333c48" stroke-width="0.22">Подп.</text>
<text x="832" y="581.8" font-size="2.2" fill="#333c48" textLength="6" lengthAdjust="spacingAndGlyphs" stroke="#333c48" stroke-width="0.22">Дата</text>
<text x="790.8" y="585.4" font-size="2.2" fill="#333c48" textLength="12" lengthAdjust="spacingAndGlyphs" stroke="#333c48" stroke-width="0.22">Разраб.</text>
<text x="804.3" y="585.4" font-size="2.2" fill="#333c48" textLength="12" lengthAdjust="spacingAndGlyphs" stroke="#333c48" stroke-width="0.22">Иванов</text>
<text x="790.8" y="589.1" font-size="2.2" fill="#333c48" stroke="#333c48" stroke-width="0.22">Пров.</text>
<text x="804.3" y="589.1" font-size="2.2" fill="#333c48" textLength="14" lengthAdjust="spacingAndGlyphs" stroke="#333c48" stroke-width="0.22">Петров</text>
<text x="605.4" y="588.1" font-size="3.4" fill="#18202c" font-style="italic" stroke="#18202c" stroke-width="0.1">1.</text>
<text x="614" y="588.1" font-size="3.4" fill="#18202c" font-style="italic" textLength="147" lengthAdjust="spacingAndGlyphs" stroke="#18202c" stroke-width="0.1">Неуказанные предельные отклонения отверстий Н14, валов h14, остальных IT14/2</text>
<text x="605.4" y="592.6" font-size="3.4" fill="#18202c" font-style="italic" stroke="#18202c" stroke-width="0.1">2.</text>
<text x="614" y="592.6" font-size="3.4" fill="#18202c" font-style="italic" textLength="141" lengthAdjust="spacingAndGlyphs" stroke="#18202c" stroke-width="0.1">В подшипники заложить 0,2 л пластичной смазки Литол-24 ГОСТ 21150-87</text>
<text x="605.4" y="597.1" font-size="3.4" fill="#18202c" font-style="italic" stroke="#18202c" stroke-width="0.1">3.</text>
<text x="614" y="597.1" font-size="3.4" fill="#18202c" font-style="italic" textLength="162" lengthAdjust="spacingAndGlyphs" stroke="#18202c" stroke-width="0.1">Стопорение резьбовых соединений осуществляется с помощью резьбовых фиксаторов.</text></svg>
<svg id="ui" width="1000" height="628" viewBox="0 0 1000 628">
<!-- top strip -->
<rect x="566" y="0" width="32" height="1" fill="#3f8fe0"/>
<rect x="598" y="0" width="130" height="1" fill="#e6e6e6"/>
<!-- title icon -->
<rect x="2.5" y="2.5" width="8" height="9.5" rx="1" fill="#fff" stroke="#e8413a" stroke-width="1"/>
<path d="M4.2 9.6 C5.6 8.6 6.3 6.6 6.2 4.8 C6.1 4 6.9 4 6.9 4.9 C6.8 6.6 7.8 8.3 9.2 8.6 C9.9 8.8 9.8 9.4 9 9.3 C7.4 9 5.8 9.2 4.6 10 C4 10.4 3.7 10 4.2 9.6Z" fill="#e8413a"/>
<g fill="#222" font-size="8.6">
<text x="15.5" y="10.6" textLength="214.5" lengthAdjust="spacingAndGlyphs">Курсач 4 лист-Модель.pdf - Adobe Acrobat Pro DC (32-bit)</text>
</g>
<g fill="#444" font-size="8.5">
<text x="4.8" y="24.7" textLength="19.2" lengthAdjust="spacingAndGlyphs">Файл</text>
<text x="33.8" y="24.7" textLength="60" lengthAdjust="spacingAndGlyphs">Редактирование</text>
<text x="103.4" y="24.7" textLength="37.6" lengthAdjust="spacingAndGlyphs">Просмотр</text>
<text x="151.2" y="24.7" textLength="32.2" lengthAdjust="spacingAndGlyphs">Подпись</text>
<text x="193.1" y="24.7" textLength="19" lengthAdjust="spacingAndGlyphs">Окно</text>
<text x="222.1" y="24.7" textLength="30.4" lengthAdjust="spacingAndGlyphs">Справка</text>
</g>
<g fill="#555" font-size="10.2">
<text x="12.5" y="45" textLength="37.5" lengthAdjust="spacingAndGlyphs">Главная</text>
<text x="73" y="45" textLength="65.5" lengthAdjust="spacingAndGlyphs">Инструменты</text>
</g>
<g fill="#505050" font-size="9.6">
<text x="179.4" y="45" textLength="84.8" lengthAdjust="spacingAndGlyphs">Колесо гибкое-Мо...</text>
<text x="301.6" y="45" textLength="81.6" lengthAdjust="spacingAndGlyphs">Курсач 2 лист-Мо...</text>
<text x="423" y="45" textLength="81.6" lengthAdjust="spacingAndGlyphs">Курсач 3 лист-Мо...</text>
<text x="544" y="45" textLength="83.2" lengthAdjust="spacingAndGlyphs" fill="#444">Курсач 4 лист-Мо...</text>
<text x="664" y="45" textLength="84.8" lengthAdjust="spacingAndGlyphs">Общий вид приво...</text>
<text x="788.8" y="45" textLength="78.4" lengthAdjust="spacingAndGlyphs">Тихоходный вал-...</text>
</g>
<path d="M635.5 39.5 L640 44 M640 39.5 L635.5 44" stroke="#555" stroke-width="1.2" fill="none"/>
<!-- toolbar text -->
<g fill="#555" font-size="8.4">
<text x="434.9" y="72.4" textLength="39.3" lengthAdjust="spacingAndGlyphs">[1] Модель</text>
<text x="484.1" y="72.4" textLength="25.5" lengthAdjust="spacingAndGlyphs">(1 из 1)</text>
<text x="664.6" y="72.6" textLength="14.6" lengthAdjust="spacingAndGlyphs">25%</text>
</g>
<rect x="428.6" y="78" width="51.6" height="0.8" fill="#c8c8c8"/>
<rect x="656.5" y="78" width="47" height="0.8" fill="#c8c8c8"/>
<path d="M694 68.2 h4.6 l-2.3 2.6z" fill="#666"/>
<rect x="523.4" y="60" width="0.8" height="18" fill="#d0d0d0"/>
<rect x="785" y="60" width="0.8" height="18" fill="#d0d0d0"/>
<!-- ICONS -->
<!-- save -->
<g fill="none" stroke="#c6c6c6" stroke-width="1.1">
<path d="M10.7 63.8 h10 l2.5 2.5 v9 h-12.5z"/>
<path d="M13.5 63.8 v4 h6 v-4"/>
<path d="M13 75.3 v-4.5 h8 v4.5"/>
</g>
<!-- star -->
<path d="M46.5 62.8 L48.7 67.6 L53.9 68.2 L50 71.7 L51.1 76.8 L46.5 74.2 L41.9 76.8 L43 71.7 L39.1 68.2 L44.3 67.6Z" fill="none" stroke="#555" stroke-width="1.15" stroke-linejoin="miter"/>
<!-- cloud upload -->
<g fill="none" stroke="#555" stroke-width="1.2" stroke-linecap="round" stroke-linejoin="round">
<path d="M73.4 73.2 h-0.9 a3.1 3.1 0 0 1 -0.6 -6.2 a4.4 4.4 0 0 1 8.4 -1.2 a3.6 3.6 0 0 1 0.3 7.400 h-1.5"/>
<path d="M76.3 76.3 v-7.6 M73.6 71 l2.7 -2.7 l2.7 2.7"/>
</g>
<!-- printer -->
<g>
<rect x="100.6" y="62.6" width="9.2" height="3.6" fill="none" stroke="#555" stroke-width="1.2"/>
<path d="M99.4 66 h11.6 a1.6 1.6 0 0 1 1.6 1.6 v5.6 h-2.4 v-3 h-10 v3 h-2.4 v-5.6 a1.6 1.6 0 0 1 1.6 -1.6z" fill="#555"/>
<rect x="100.8" y="70.6" width="8.8" height="5" fill="#fafafa" stroke="#555" stroke-width="1.1"/>
<path d="M102.8 72.4 h4.8 M102.8 74 h4.8" stroke="#555" stroke-width="0.8"/>
<rect x="109.6" y="67.3" width="1.4" height="0.9" fill="#fafafa"/>
</g>
<!-- search -->
<g fill="none" stroke="#555" stroke-width="1.3">
<circle cx="134.3" cy="68.3" r="5.3"/>
<path d="M138.2 72.2 L143 76.8" stroke-width="1.8" stroke-linecap="round"/>
<path d="M131.4 68.3 h1.2 M133.7 68.3 h1.2 M136 68.3 h1.2" stroke-width="1.1"/>
</g>
<!-- up/down page -->
<g fill="none" stroke="#bcbcbc" stroke-width="1.1" stroke-linecap="round" stroke-linejoin="round">
<circle cx="377.7" cy="69.5" r="6.6"/>
<path d="M377.7 73 v-7 M374.9 68.6 l2.8 -2.8 l2.8 2.8"/>
<circle cx="407.3" cy="69.5" r="6.6"/>
<path d="M407.3 66 v7 M404.5 70.4 l2.8 2.8 l2.8 -2.8"/>
</g>
<!-- cursor -->
<path d="M542.3 62.6 L542.3 74 L545 71.6 L547.1 76 L548.9 75.2 L546.8 70.9 L550.4 70.6Z" fill="#2a6fd6"/>
<!-- hand -->
<g fill="none" stroke="#555" stroke-width="1.1" stroke-linecap="round" stroke-linejoin="round">
<path d="M571.8 71.2 v-6.3 a1.2 1.2 0 0 1 2.4 0 v4.6 v-5.800 a1.2 1.2 0 0 1 2.4 0 v5.600 v-5 a1.2 1.2 0 0 1 2.4 0 v5.400 v-3.600 a1.200 1.200 0 0 1 2.400 0 v6.600 c0 3.200 -1.900 5.300 -4.900 5.300 c-2.700 0 -4.100 -1 -5.200 -2.700 l-2.700 -3.900 c-0.800 -1.200 0.600 -2.200 1.600 -1.200 z"/>
</g>
<!-- zoom out / in -->
<g fill="none" stroke="#555" stroke-width="1.3">
<circle cx="604.7" cy="69.3" r="6.5"/>
<path d="M601.4 69.3 h6.6"/>
<circle cx="634.5" cy="69.3" r="6.5"/>
<path d="M631.2 69.3 h6.6 M634.5 66 v6.6"/>
</g>
<!-- fit page -->
<g fill="none" stroke="#2a6fd6" stroke-width="1.3" stroke-linejoin="round">
<path d="M719.9 62.9 h7.6 l3.7 3.7 v8.6 h-11.3z"/>
<path d="M727.3 62.9 v3.9 h3.9" stroke-width="1"/>
</g>
<g fill="#2a6fd6" stroke="#2a6fd6" stroke-width="0.8">
<path d="M725.4 66.3 v7 M722 69.8 h6.8" fill="none"/>
<path d="M725.4 65 l1.4 1.7 h-2.8z M725.4 74.6 l1.4 -1.7 h-2.8z M720.9 69.8 l1.7 -1.4 v2.8z M729.9 69.8 l-1.7 -1.4 v2.8z" stroke="none"/>
</g>
<path d="M735.4 68.3 h4.4 l-2.2 2.4z" fill="#2a6fd6"/>
<!-- scroll icon -->
<g fill="none" stroke="#555" stroke-width="1.2">
<rect x="756.8" y="63.6" width="13.4" height="4.4"/>
<path d="M763.5 70 v6.4 M760.7 73.8 l2.8 2.8 l2.8 -2.8" stroke-linecap="round" stroke-linejoin="round"/>
<path d="M759 65.8 h1.2 M761.6 65.8 h1.2 M764.2 65.8 h1.2 M766.8 65.8 h1.2" stroke-width="1"/>
</g>
<!-- comment -->
<g fill="none" stroke="#555" stroke-width="1.2" stroke-linejoin="round">
<path d="M801.6 63.8 h11 a0.8 0.8 0 0 1 0.8 0.8 v7.2 a0.8 0.8 0 0 1 -0.8 0.8 h-4.2 l-2.6 3 v-3 h-4.2 a0.8 0.8 0 0 1 -0.8 -0.8 v-7.2 a0.8 0.8 0 0 1 0.8 -0.8z"/>
<path d="M803.4 66.4 h7.4 M803.4 68.6 h7.4" stroke="#999" stroke-width="0.9"/>
</g>
<!-- highlighter -->
<rect x="832" y="73.6" width="12" height="3" fill="#dcdcdc"/>
<g fill="none" stroke="#555" stroke-width="1.1" stroke-linejoin="round">
<path d="M832.8 71 l7.400 -7.800 a2.100 2.100 0 0 1 3 0 l0.400 0.400 a2.100 2.100 0 0 1 0 3 l-7.800 7.400z"/>
</g>
<path d="M833 71.2 l2.6 2.6 l-2.6 1.6 l-4 0.6z" fill="#555"/>
<!-- sign -->
<g fill="none" stroke="#555" stroke-width="1.1" stroke-linejoin="round" stroke-linecap="round">
<path d="M859.6 75.6 c-0.6 -3.4 0.6 -6.8 3.6 -8.4 l2.4 -1 l3.4 3.4 l-1 2.4 c-1.6 3 -5 4.200 -8.400 3.600z"/>
<path d="M859.8 75.400 l4.800 -4.800"/>
<circle cx="865" cy="70.200" r="0.900"/>
<path d="M865.4 66.400 l2.200 -3.400 M869.200 69.800 l3.200 -2.400"/>
<path d="M867.600 63 l4.800 4.400" stroke="#aaa"/>
<path d="M867.600 75.800 l1.400 -2.600 l0.600 2.600 l1.200 -1.600 l0.600 1.600 l1 -1 l0.600 1 h1" stroke-width="0.900"/>
</g>
<!-- doc edit -->
<g fill="none" stroke="#555" stroke-width="1.200" stroke-linejoin="round">
<path d="M891 64.200 v-1.600 h6.600 l3.400 3.400 v1.600"/>
<path d="M897.400 62.600 v3.600 h3.600" stroke-width="1"/>
<path d="M891 70.400 v4.400 h3.600"/>
</g>
<rect x="888.200" y="64.600" width="5.400" height="4" fill="#555"/>
<g fill="#fafafa" stroke="#555" stroke-width="1.100" stroke-linejoin="round">
<path d="M895.600 75 l6.600 -6.600 l1.800 1.800 l-6.600 6.600 l-2.400 0.600z"/>
</g>
<!-- sidebar icons -->
<g fill="none" stroke="#555" stroke-width="1.3" stroke-linejoin="round">
<path d="M13.6 104 v-3.300 h5.200 l3.300 3.300 v7.400 h-8.500z"/>
<path d="M18.600 100.700 v3.500 h3.500" stroke-width="1"/>
<path d="M13.400 104.200 h-3.600 v10.400 h8 v-3"/>
</g>
<path d="M10.7 132.4 h7.8 v13.2 l-3.9 -3.7 l-3.9 3.7z" fill="none" stroke="#2a6fd6" stroke-width="1.4" stroke-linejoin="miter"/>
<path d="M30.500 134.600 l-4 4.400 l4 4.400z" fill="#fdfdfd" stroke="#dedede" stroke-width="0.800"/>
<rect x="30.200" y="135.400" width="1.200" height="7.200" fill="#fdfdfd"/>
<g fill="none" stroke="#555" stroke-width="1.300" stroke-linecap="round">
<path d="M17 166.600 l-4.800 4.800 a1.400 1.400 0 0 0 2 2 l5.200 -5.200 a2.800 2.800 0 0 0 -4 -4 l-5.400 5.400 a4.100 4.100 0 0 0 5.800 5.800 l4.100 -4.100"/>
</g>
<g fill="none" stroke="#555" stroke-width="1.200" stroke-linejoin="round">
<path d="M15 196 l6.400 3.300 l-6.400 3.300 l-6.400 -3.300z" stroke-width="1.400"/>
<path d="M8.600 203 l6.400 3.300 l6.400 -3.300" stroke-width="1.400"/>
<path d="M8.600 206.700 l6.400 3.300 l6.400 -3.300" stroke-width="1.400"/>
</g>
<!-- panel -->
<g fill="#555" font-size="10.400">
<text x="41.200" y="102.300" textLength="42" lengthAdjust="spacingAndGlyphs">Закладки</text>
<text x="68.500" y="162" textLength="63.800" lengthAdjust="spacingAndGlyphs">Листы и виды</text>
<text x="80" y="183.500" textLength="35" lengthAdjust="spacingAndGlyphs">Модель</text>
</g>
<path d="M168.700 94.600 l7.600 7.600 M176.300 94.600 l-7.600 7.600" stroke="#555" stroke-width="1.300" fill="none"/>
<rect x="40" y="112.500" width="142.500" height="1" fill="#e6e6e6"/>
<rect x="40" y="142" width="142.500" height="1" fill="#e6e6e6"/>
<!-- list icon -->
<g fill="none" stroke="#555" stroke-width="1.200">
<rect x="41.600" y="122.800" width="12.500" height="9.800" rx="0.800"/>
<path d="M47.400 126 h4.600 M47.400 129.500 h4.600" stroke-width="1"/>
</g>
<rect x="44" y="125.300" width="1.800" height="1.500" fill="#555"/><rect x="44" y="128.800" width="1.800" height="1.500" fill="#555"/>
<path d="M59 127.200 h4.200 l-2.100 2.300z" fill="#555"/>
<rect x="69.200" y="118.300" width="0.800" height="18.200" fill="#d8d8d8"/>
<!-- trash -->
<g fill="none" stroke="#555" stroke-width="1.200" stroke-linejoin="round">
<path d="M76.800 122.800 h12.800"/>
<path d="M80.600 122.600 v-1.600 h5.200 v1.600"/>
<path d="M78 123 l1 11 h8.400 l1 -11"/>
<path d="M81.200 125.300 v6.700 M83.200 125.300 v6.700 M85.200 125.300 v6.700" stroke-width="0.800"/>
</g>
<!-- new bookmark -->
<path d="M100 120.900 h7.300 v7.300 M100 120.900 v13 l3 -2.800" fill="none" stroke="#555" stroke-width="1.200" stroke-linejoin="miter"/>
<circle cx="110" cy="131.600" r="3.700" fill="#555"/>
<path d="M107.700 131.600 h4.600 M110 129.300 v4.600" stroke="#fdfdfd" stroke-width="1.300" fill="none"/>
<!-- find bookmark -->
<path d="M124.500 120.900 h7.900 v8 M124.500 120.900 v13.300 l4 -3.700 l1.600 1.500" fill="none" stroke="#555" stroke-width="1.200"/>
<circle cx="128.400" cy="125.400" r="1.900" fill="none" stroke="#555" stroke-width="0.900"/>
<path d="M128.400 127.300 v2.200" stroke="#555" stroke-width="0.900"/>
<path d="M131.900 128.200 v7 l1.700 -1.600 l3.500 0.100z" fill="#555"/>
<!-- tree -->
<path d="M38.900 156.600 l3.500 3.500 l3.500 -3.500" fill="none" stroke="#555" stroke-width="1.100"/>
<path d="M53.100 152.700 h6.500 v10.600 l-3.250 -2.900 l-3.250 2.900z" fill="#ddd" stroke="#555" stroke-width="1.200"/>
<path d="M63.900 174 h7 v10.800 l-3.500 -2.900 l-3.500 2.900z" fill="#ddd" stroke="#555" stroke-width="1.200"/>
<!-- splitter arrow -->
<path d="M199.700 389.500 v7.400 l-3.600 -3.700z" fill="#444"/>
<!-- ICONS4 -->
</svg>
</body></html>
